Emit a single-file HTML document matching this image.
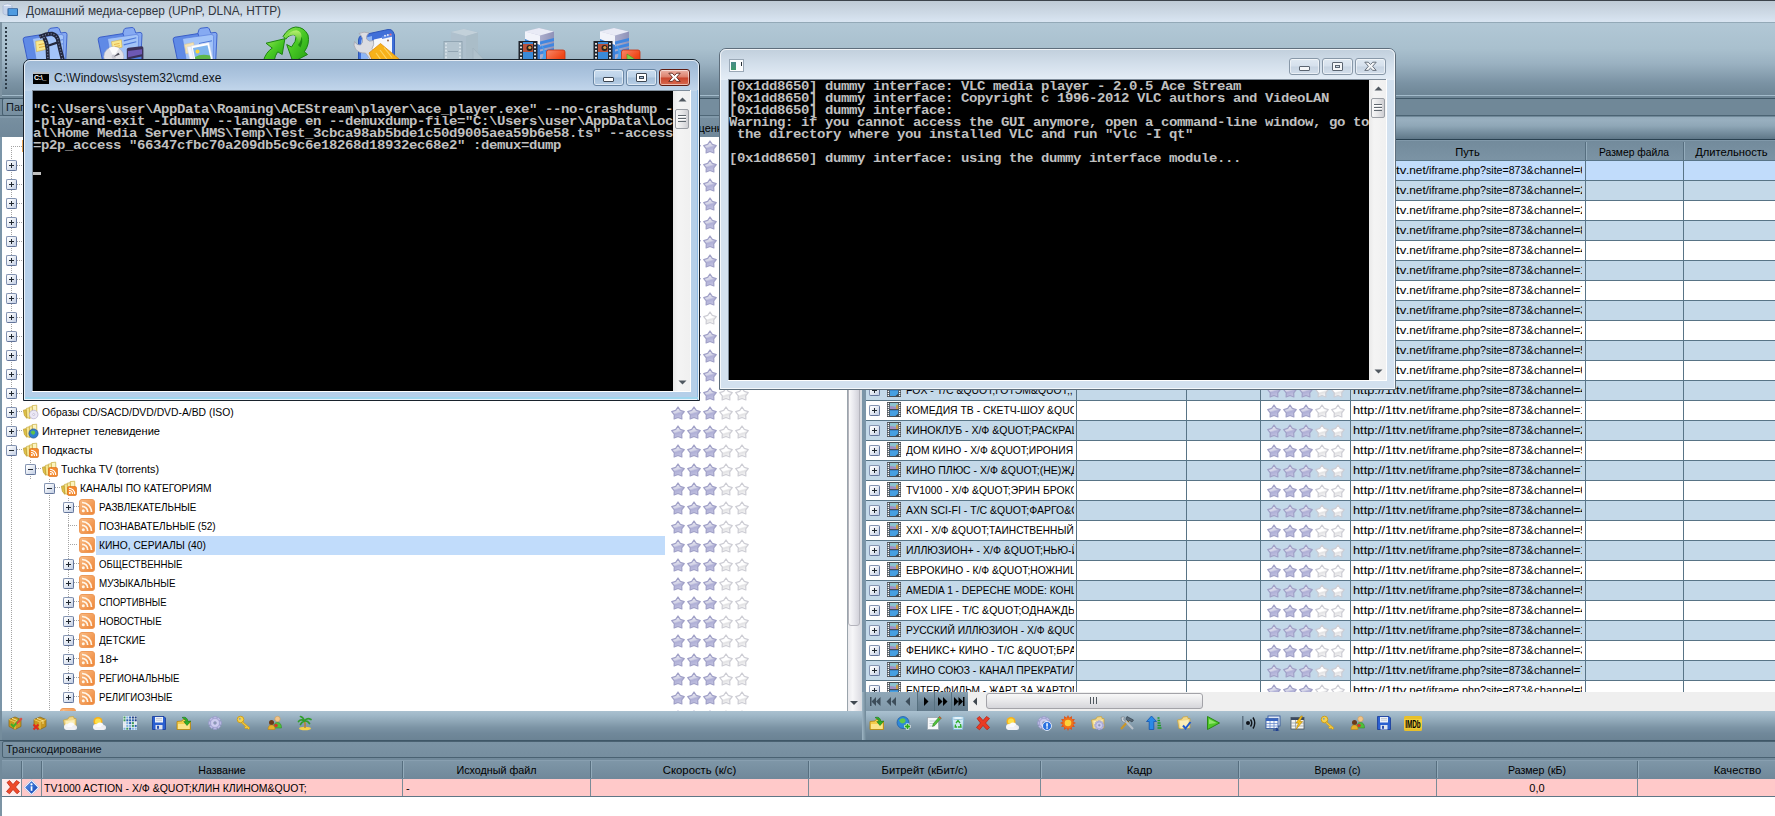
<!DOCTYPE html><html><head><meta charset="utf-8"><title>HMS</title><style>
html,body{margin:0;padding:0}
body{width:1775px;height:816px;overflow:hidden;position:relative;background:#fff;font-family:"Liberation Sans",sans-serif;font-size:11px;color:#000;line-height:1}
div,span,svg{position:absolute;box-sizing:border-box}
.t{white-space:nowrap;font-size:11px;line-height:13px;height:13px}
.con{font-family:"Liberation Mono","DejaVu Sans Mono",monospace;font-weight:bold;font-size:14px;line-height:12px;height:12px;color:#c0c0c0;white-space:pre;letter-spacing:-0.4px;left:0;transform:scaleY(.9);transform-origin:0 10px}
.pm{width:11px;height:11px;border:1px solid;border-color:#8494b2 #62749a #62749a #8494b2;border-radius:2px;background:linear-gradient(135deg,#fff 10%,#c3cfe4)}
.pm i{position:absolute;left:2px;top:4px;width:5px;height:1px;background:#202830}
.pm b{position:absolute;left:4px;top:2px;width:1px;height:5px;background:#202830}
.hl{white-space:nowrap;font-size:11px;line-height:13px;height:13px;text-align:center;color:#000}
.row{left:0;width:909px;height:20px;border-bottom:1px solid #5f7787}
.vs{top:0;width:1px;height:100%;background:#5f7787}
</style></head><body>
<div style="left:0;top:0;width:1775px;height:22px;background:linear-gradient(#bdc9d4,#cbd7e3 50%,#d9e5f2)"></div>
<div style="left:0;top:0;width:1775px;height:1px;background:#3c434b"></div>
<svg style="left:2px;top:3px" width="17" height="15" viewBox="0 0 17 15">
<ellipse cx="5.5" cy="3" rx="4.5" ry="2" fill="#e8eef8" stroke="#9fb0cc" stroke-width=".6"/>
<path d="M1 3v7c0 1.2 2 2 4.5 2s4.500-.8 4.500-2V3" fill="#c5d3ea" stroke="#9fb0cc" stroke-width=".6"/>
<rect x="5.500" y="5.200" width="10.500" height="7.800" rx=".8" fill="#2a5f9a"/>
<rect x="6.500" y="6" width="8.500" height="6" fill="#4f9be0"/>
</svg>
<div class="t" style="left:26px;top:4px;font-size:12px;line-height:14px;height:14px;color:#30363e;transform:scaleX(0.9859);transform-origin:0 0">Домашний медиа-сервер (UPnP, DLNA, HTTP)</div>
<div style="left:0;top:22px;width:1775px;height:76px;background:linear-gradient(#b2c8d6 0%,#a9c0ce 35%,#9ab1c1 55%,#7b93a4 80%,#6d8595 97%)"></div>
<div style="left:0;top:22px;width:1775px;height:1px;background:#93a9b7"></div>
<div style="left:0;top:95px;width:1775px;height:1px;background:#a3bbcb"></div>
<div style="left:0;top:96px;width:1775px;height:2px;background:#6f8797"></div>
<div style="left:0;top:98px;width:1775px;height:1px;background:#3f5767"></div>
<div style="left:0;top:22px;width:2px;height:76px;background:#7d93a2"></div>
<div style="left:5px;top:27px;width:2px;height:64px;background:repeating-linear-gradient(#2e3c48 0 2px,transparent 2px 4px)"></div>
<svg style="left:21px;top:25px" width="50" height="40" viewBox="0 0 50 40"><path d="M26.500 9.500 L28 4.600 Q28.500 3.400 30 3.200 L36 2.500 Q37.600 2.500 38.300 3.900 L39.800 8 L44 7.400 Q46 7.400 46 9.600 L44.500 40 L12 40 Z" fill="#86aaf2" stroke="#3f63cb" stroke-width="1"/>
<path d="M2.200 14.800 Q1.800 12.600 4 12.200 L27 8.600 L37 40 L7.500 40 Z" fill="#5f8ae6" stroke="#3b5ec8" stroke-width="1"/>
<path d="M11.500 13.500 L40 9.500 Q42.500 9.300 42.600 11.500 L42 40 L16 40 Z" fill="#a3c4f8" stroke="#5a80dc" stroke-width=".7"/><path d="M14.700 16.300 L25 14.700 L25.800 24.200 L15.500 26.600 Z" fill="#f9e88e" stroke="#d4b048" stroke-width=".6"/><path d="M17.500 19.800 l6 -1.200 M18 22.500 l6 -1.200" stroke="#e0a838" stroke-width=".9"/><path d="M37 15.500 l5 -.8 M37.500 19.500 l4.500 -.7" stroke="#5a82d8" stroke-width=".9"/><path d="M18.500 12 Q26 8.500 31 8.800 Q35.500 10 36.800 14 Q38.500 22 41.800 35 L43 40" fill="none" stroke="#23283c" stroke-width="4"/><path d="M18.500 12 Q26 8.500 31 8.800 Q35.500 10 36.800 14 Q38.500 22 41.800 35 L43 40" fill="none" stroke="#7f8db4" stroke-width="1.200" stroke-dasharray="1 1.900"/><path d="M23 12.400 Q26 17 26.500 24 L27.200 40" fill="none" stroke="#23283c" stroke-width="3.800"/><path d="M23 12.400 Q26 17 26.500 24 L27.200 40" fill="none" stroke="#7f8db4" stroke-width="1.100" stroke-dasharray="1 1.900"/><path d="M27 20.700 L37.600 17.100" stroke="#23283c" stroke-width="2.200"/></svg>
<svg style="left:96px;top:25px" width="52" height="40" viewBox="0 0 52 40"><path d="M26.500 9.500 L28 4.600 Q28.500 3.400 30 3.200 L36 2.500 Q37.600 2.500 38.300 3.900 L39.800 8 L44 7.400 Q46 7.400 46 9.600 L44.500 40 L12 40 Z" fill="#86aaf2" stroke="#3f63cb" stroke-width="1"/>
<path d="M2.200 14.800 Q1.800 12.600 4 12.200 L27 8.600 L37 40 L7.500 40 Z" fill="#5f8ae6" stroke="#3b5ec8" stroke-width="1"/>
<path d="M11.500 13.500 L40 9.500 Q42.500 9.300 42.600 11.500 L42 40 L16 40 Z" fill="#a3c4f8" stroke="#5a80dc" stroke-width=".7"/><path d="M15.500 16.700 L25.300 14.700 L26.100 22.200 L16.600 24.200 Z" fill="#f9e88e" stroke="#d4b048" stroke-width=".6"/><path d="M18 19.500 l5.500 -1.100 M18.500 21.800 l5.500 -1.100" stroke="#e0a838" stroke-width=".8"/><path d="M27.700 15.900 L40.300 12.800 M27.700 19.900 L40.300 16.700" stroke="#4d78d8" stroke-width="1.100"/><path d="M30.800 24.400 Q31 23 32.500 22.800 L45.500 21.300 Q47.400 21.300 47.400 23 L47.400 40 L30.800 40Z" fill="#3b3158"/><path d="M32 26 l14 -1.800 v5 l-14 3z" fill="#6d58b4"/><path d="M32 34.500 l13.500 -3 v3 l-13.500 3z" fill="#4f7fe0"/><circle cx="17.800" cy="31.700" r="10" fill="#e2e2e7" stroke="#b4b4bd" stroke-width=".6"/><path d="M17.800 31.700 L13 23 A10 10 0 0 1 23 23.200Z" fill="#fbfbfc"/><circle cx="17.800" cy="31.700" r="2.200" fill="#c9c9d2"/><path d="M17.800 31.700 l4.500 -4 l1.500 1.800z" fill="#4a4a55"/></svg>
<svg style="left:171px;top:25px" width="50" height="40" viewBox="0 0 50 40"><path d="M26.500 9.500 L28 4.600 Q28.500 3.400 30 3.200 L36 2.500 Q37.600 2.500 38.300 3.900 L39.800 8 L44 7.400 Q46 7.400 46 9.600 L44.500 40 L12 40 Z" fill="#86aaf2" stroke="#3f63cb" stroke-width="1"/>
<path d="M2.200 14.800 Q1.800 12.600 4 12.200 L27 8.600 L37 40 L7.500 40 Z" fill="#5f8ae6" stroke="#3b5ec8" stroke-width="1"/>
<path d="M11.500 13.500 L40 9.500 Q42.500 9.300 42.600 11.500 L42 40 L16 40 Z" fill="#a3c4f8" stroke="#5a80dc" stroke-width=".7"/><path d="M28 18.500 l13 -2.700" stroke="#4d78d8" stroke-width="1"/><path d="M13.500 19.500 l9 -2 l2 9 l-9.500 2.200 z" fill="#f4e3b5" stroke="#d8c08a" stroke-width=".5"/><path d="M16 22 l18 -3.500 l4 21.500 l-18 0 z" fill="#f4f7ff" stroke="#c9d3ea" stroke-width=".5"/><path d="M20 21 l18 -3.500 l5 22.500 l-19 0 z" fill="#ffffff" stroke="#c9d3ea" stroke-width=".5"/><path d="M22 23 l14.500 -2.800 l3 13 l-14.800 2.800 z" fill="#7fb5ee"/><path d="M24 32 q6 -3.500 15 -1.500 l1 5 l-15 3z" fill="#5fb84a"/><circle cx="26.500" cy="26.500" r="2" fill="#f7d53a"/></svg>
<svg style="left:260px;top:24px" width="52" height="40" viewBox="0 0 52 40"><defs><linearGradient id="gg" x1="0" y1="0" x2="1" y2="1"><stop offset="0" stop-color="#9be858"/><stop offset=".5" stop-color="#48c824"/><stop offset="1" stop-color="#22a012"/></linearGradient><linearGradient id="gh" x1="0" y1="0" x2="0" y2="1"><stop offset="0" stop-color="#b8f070"/><stop offset="1" stop-color="#3cb81c"/></linearGradient></defs><path d="M3.300 37 Q6 28 12.300 24.100 L6 19.200 L24.900 14.700 L22.200 30.500 L17.700 27.800 Q15 31.500 14.100 37 Z" fill="url(#gg)" stroke="#1c8410" stroke-width="1"/><path d="M23.100 12.400 Q28 4 35.700 3 Q44 3 48 11 Q50 20 44.300 27.800 L47.500 30.500 L33 38 L26.700 20.500 L31.500 23 Q36.500 17 36 12.500 Q34.500 9.500 30 11.500 Q27 13 25.800 15.200 Z" fill="url(#gg)" stroke="#1c8410" stroke-width="1"/><path d="M26.500 13 Q30 6.500 36.500 6.300 Q41.500 7 41.500 12.500 Q41 18 38 21 Q38.500 16 36 12.500 Q34.500 9.500 30 11.500 Q28 12.300 26.500 13Z" fill="url(#gh)"/><path d="M38 21 Q41 18 41.500 12.500 Q43.500 17 40.500 23.500Z" fill="#1f8a12"/></svg>
<svg style="left:350px;top:26px" width="52" height="38" viewBox="0 0 52 38"><path d="M8.500 14 Q8.500 10 12.500 9 L38 3.500 Q41.500 3 43 5.500 L44.500 9 L44.500 38 L8.500 38 Z" fill="#3f6fd8" stroke="#2c55b8" stroke-width="1"/><path d="M11 16 Q11 12.500 14 12 L22 10 L22 38 L11 38Z" fill="#8db5f5"/><path d="M24 13.500 L42 9.500 L42 38 L17 38 Z" fill="#f6f8fc"/><path d="M32 10 l10 -2.300 v3 l-10 2.300z" fill="#5a86e4"/><circle cx="35" cy="9.800" r="1" fill="#dfe8fa"/><circle cx="37.800" cy="9.100" r="1" fill="#dfe8fa"/><circle cx="40.500" cy="8.500" r="1.100" fill="#e86a7a"/><circle cx="38" cy="14.500" r=".9" fill="#8a5a3a"/><path d="M9 7.500 Q14 5 19 7 Q16 9.500 16.500 13 Q19 16.500 23.500 14.500 Q24.500 19 22 22.500 L29 31 L22 36 L15.500 27 Q9 27.500 5.500 23 Q3 19 4.500 15.500 Q6.500 19.500 10.500 19 Q13.500 16.500 12.500 12.500 Q11.500 9.500 9 7.500Z" fill="#dcdde2" stroke="#a3a5ae" stroke-width=".8"/><path d="M19 27 L30.500 17.500 L49 33 L46 38 L24 38 Z" fill="#f7b21a" stroke="#e08f10" stroke-width=".8"/><path d="M26 27 l8 11 M30 24 l9 12 M34 21.500 l8 10" stroke="#fbd463" stroke-width="1.200"/></svg>
<svg style="left:442px;top:27px" width="52" height="38" viewBox="0 0 52 38"><path d="M9 5 L22 2 L36 5.500 L36 38 L9 38Z" fill="#afc0cc" opacity=".85"/><path d="M9 5 L22 2 L36 5.500 L24 9 Z" fill="#c5d3dc" opacity=".9"/><path d="M24 9 L36 5.500 L36 38 L24 38Z" fill="#a9bbc7" opacity=".8"/><rect x="2" y="14.500" width="18" height="24" fill="#b4c5d0" stroke="#8ea2b0" stroke-width=".9"/><path d="M4 16 v22 M18 16 v22" stroke="#dfe8ee" stroke-width="1.600" stroke-dasharray="1.600 1.800"/><path d="M6 24.500 h10" stroke="#8ea2b0" stroke-width=".9"/><path d="M31 38 L31 21 L47 38Z" fill="#b0c1cc" stroke="#9eb0bc" stroke-width=".6"/></svg>
<svg style="left:517px;top:26px" width="52" height="38" viewBox="0 0 52 38"><defs><linearGradient id="sv517" x1="0" y1="0" x2="1" y2="0"><stop offset="0" stop-color="#c9cbe2"/><stop offset="1" stop-color="#8f92b8"/></linearGradient><linearGradient id="rd517" x1="0" y1="0" x2="1" y2="1"><stop offset="0" stop-color="#f98a6a"/><stop offset=".6" stop-color="#f0481a"/><stop offset="1" stop-color="#d9360c"/></linearGradient></defs><path d="M8 5.500 L22 2 L37 5.500 L37 38 L8 38Z" fill="url(#sv517)"/><path d="M8 5.500 L22 2 L37 5.500 L23 9.500 Z" fill="#e9ebf6"/><path d="M8 5.500 L23 9.500 L23 38 L8 38Z" fill="#f1f3fa"/><path d="M8 13 L23 19 L23 38 L8 38Z" fill="#3b7fd6"/><path d="M23 15.500 L37 12 V15 L23 18.500Z M23 20.500 L37 17 V20 L23 23.500Z M23 25.500 L37 22 V25 L23 28.500Z" fill="#3f86e0"/><path d="M21 14 Q28 22 26 31 Q22 36 14 38 L30 38 Q32 26 21 14Z" fill="#4aa0ee"/><rect x="2" y="15.500" width="18" height="23" fill="#3a8ad8" stroke="#20242c" stroke-width="1"/><rect x="5.500" y="18" width="11" height="8" fill="#b8503a"/><circle cx="12.500" cy="22" r="3" fill="#2a2420"/><circle cx="12.800" cy="21.500" r="1.600" fill="#d89a4a"/><path d="M2 15.500 h4 v23 h-4z M16 15.500 h4 v23 h-4z" fill="#20242c"/><path d="M4 17 v22 M18 17 v22" stroke="#f4f4f4" stroke-width="1.800" stroke-dasharray="1.800 1.700"/><path d="M9 38 Q11 34 16 33 L14 38Z" fill="#15181c"/><rect x="29.500" y="24" width="18.500" height="16" rx="2" fill="url(#rd517)" stroke="#c8300c" stroke-width=".8"/></svg>
<svg style="left:592px;top:26px" width="52" height="38" viewBox="0 0 52 38"><defs><linearGradient id="sv592" x1="0" y1="0" x2="1" y2="0"><stop offset="0" stop-color="#c9cbe2"/><stop offset="1" stop-color="#8f92b8"/></linearGradient><linearGradient id="rd592" x1="0" y1="0" x2="1" y2="1"><stop offset="0" stop-color="#f98a6a"/><stop offset=".6" stop-color="#f0481a"/><stop offset="1" stop-color="#d9360c"/></linearGradient></defs><path d="M8 5.500 L22 2 L37 5.500 L37 38 L8 38Z" fill="url(#sv592)"/><path d="M8 5.500 L22 2 L37 5.500 L23 9.500 Z" fill="#e9ebf6"/><path d="M8 5.500 L23 9.500 L23 38 L8 38Z" fill="#f1f3fa"/><path d="M8 13 L23 19 L23 38 L8 38Z" fill="#3b7fd6"/><path d="M23 15.500 L37 12 V15 L23 18.500Z M23 20.500 L37 17 V20 L23 23.500Z M23 25.500 L37 22 V25 L23 28.500Z" fill="#3f86e0"/><path d="M21 14 Q28 22 26 31 Q22 36 14 38 L30 38 Q32 26 21 14Z" fill="#4aa0ee"/><rect x="2" y="15.500" width="18" height="23" fill="#3a8ad8" stroke="#20242c" stroke-width="1"/><rect x="5.500" y="18" width="11" height="8" fill="#b8503a"/><circle cx="12.500" cy="22" r="3" fill="#2a2420"/><circle cx="12.800" cy="21.500" r="1.600" fill="#d89a4a"/><path d="M2 15.500 h4 v23 h-4z M16 15.500 h4 v23 h-4z" fill="#20242c"/><path d="M4 17 v22 M18 17 v22" stroke="#f4f4f4" stroke-width="1.800" stroke-dasharray="1.800 1.700"/><path d="M9 38 Q11 34 16 33 L14 38Z" fill="#15181c"/><rect x="29.500" y="24" width="18.500" height="16" rx="2" fill="url(#rd592)" stroke="#c8300c" stroke-width=".8"/><path d="M35 28 L35 40 L47 36 Z" fill="#7fd04a" stroke="#4a9a20" stroke-width=".6"/></svg>
<svg width="0" height="0" style="left:0;top:0"><defs><linearGradient id="sf" x1=".35" y1="0" x2=".65" y2="1"><stop offset="0" stop-color="#ebebf3"/><stop offset=".42" stop-color="#d6d6e8"/><stop offset=".56" stop-color="#afafd6"/><stop offset="1" stop-color="#c6c6e3"/></linearGradient><linearGradient id="se" x1=".35" y1="0" x2=".65" y2="1"><stop offset="0" stop-color="#ffffff"/><stop offset=".5" stop-color="#ffffff"/><stop offset=".62" stop-color="#e2e2e4"/><stop offset="1" stop-color="#fafafa"/></linearGradient><g id="s1"><path d="M7.00 1.00 L9.29 4.44 L13.28 5.56 L10.71 8.81 L10.88 12.94 L7.00 11.50 L3.12 12.94 L3.29 8.81 L0.72 5.56 L4.71 4.44 Z" fill="url(#sf)" stroke="#a0a0c7" stroke-width="1.2" stroke-linejoin="round"/></g><g id="s0"><path d="M7.00 1.00 L9.29 4.44 L13.28 5.56 L10.71 8.81 L10.88 12.94 L7.00 11.50 L3.12 12.94 L3.29 8.81 L0.72 5.56 L4.71 4.44 Z" fill="url(#se)" stroke="#cdcdd4" stroke-width="1.2" stroke-linejoin="round"/></g><g id="st3"><use href="#s1"/><use href="#s1" x="16"/><use href="#s1" x="32"/><use href="#s0" x="48"/><use href="#s0" x="64"/></g><g id="st2"><use href="#s1"/><use href="#s1" x="16"/><use href="#s0" x="32"/><use href="#s0" x="48"/><use href="#s0" x="64"/></g></defs></svg>
<div style="left:0;top:99px;width:862px;height:38px;background:#758d9e"></div>
<div style="left:0;top:115px;width:862px;height:1px;background:#4f6777"></div>
<div style="left:0;top:116px;width:862px;height:2px;background:#8199aa"></div>
<div style="left:0;top:118px;width:862px;height:19px;background:linear-gradient(#778fa0,#70889a)"></div>
<div style="left:2px;top:98px;width:70px;height:18px;border:1px solid #465e6e;border-radius:2px;background:linear-gradient(#869eaf,#768e9f)"></div>
<div class="t" style="left:6px;top:101px;color:#10181f">Папки</div>
<div class="hl" style="left:667px;top:122px;width:84px">Оценка</div>
<div style="left:0;top:137px;width:862px;height:574px;background:#7b95a8"></div>
<div style="left:2px;top:137px;width:845px;height:574px;background:#fff;overflow:hidden" id="tree">
<div style="left:9px;top:9px;width:1px;height:570px;background:repeating-linear-gradient(180deg,#a4a4a4 0 1px,transparent 1px 2px)"></div>
<div style="left:28px;top:323px;width:1px;height:19px;background:repeating-linear-gradient(180deg,#a4a4a4 0 1px,transparent 1px 2px)"></div>
<div style="left:47px;top:342px;width:1px;height:237px;background:repeating-linear-gradient(180deg,#a4a4a4 0 1px,transparent 1px 2px)"></div>
<div style="left:66px;top:361px;width:1px;height:199px;background:repeating-linear-gradient(180deg,#a4a4a4 0 1px,transparent 1px 2px)"></div>
<div style="left:9px;top:9px;width:11px;height:1px;background:repeating-linear-gradient(90deg,#a4a4a4 0 1px,transparent 1px 2px)"></div>
<div style="left:20px;top:3px;width:3px;height:12px;background:#e9a455"></div>
<svg style="left:669px;top:3px" width="78" height="15" viewBox="0 0 78 15"><use href="#st3"/></svg>
<div style="left:15px;top:28px;width:5px;height:1px;background:repeating-linear-gradient(90deg,#a4a4a4 0 1px,transparent 1px 2px)"></div>
<div class="pm" style="left:4px;top:23px"><i></i><b></b></div>
<svg style="left:669px;top:22px" width="78" height="15" viewBox="0 0 78 15"><use href="#st3"/></svg>
<div style="left:15px;top:47px;width:5px;height:1px;background:repeating-linear-gradient(90deg,#a4a4a4 0 1px,transparent 1px 2px)"></div>
<div class="pm" style="left:4px;top:42px"><i></i><b></b></div>
<svg style="left:669px;top:41px" width="78" height="15" viewBox="0 0 78 15"><use href="#st3"/></svg>
<div style="left:15px;top:66px;width:5px;height:1px;background:repeating-linear-gradient(90deg,#a4a4a4 0 1px,transparent 1px 2px)"></div>
<div class="pm" style="left:4px;top:61px"><i></i><b></b></div>
<svg style="left:669px;top:60px" width="78" height="15" viewBox="0 0 78 15"><use href="#st3"/></svg>
<div style="left:15px;top:85px;width:5px;height:1px;background:repeating-linear-gradient(90deg,#a4a4a4 0 1px,transparent 1px 2px)"></div>
<div class="pm" style="left:4px;top:80px"><i></i><b></b></div>
<svg style="left:669px;top:79px" width="78" height="15" viewBox="0 0 78 15"><use href="#st3"/></svg>
<div style="left:15px;top:104px;width:5px;height:1px;background:repeating-linear-gradient(90deg,#a4a4a4 0 1px,transparent 1px 2px)"></div>
<div class="pm" style="left:4px;top:99px"><i></i><b></b></div>
<svg style="left:669px;top:98px" width="78" height="15" viewBox="0 0 78 15"><use href="#st3"/></svg>
<div style="left:15px;top:123px;width:5px;height:1px;background:repeating-linear-gradient(90deg,#a4a4a4 0 1px,transparent 1px 2px)"></div>
<div class="pm" style="left:4px;top:118px"><i></i><b></b></div>
<svg style="left:669px;top:117px" width="78" height="15" viewBox="0 0 78 15"><use href="#st3"/></svg>
<div style="left:15px;top:142px;width:5px;height:1px;background:repeating-linear-gradient(90deg,#a4a4a4 0 1px,transparent 1px 2px)"></div>
<div class="pm" style="left:4px;top:137px"><i></i><b></b></div>
<svg style="left:669px;top:136px" width="78" height="15" viewBox="0 0 78 15"><use href="#st3"/></svg>
<div style="left:15px;top:161px;width:5px;height:1px;background:repeating-linear-gradient(90deg,#a4a4a4 0 1px,transparent 1px 2px)"></div>
<div class="pm" style="left:4px;top:156px"><i></i><b></b></div>
<svg style="left:669px;top:155px" width="78" height="15" viewBox="0 0 78 15"><use href="#st3"/></svg>
<div style="left:15px;top:180px;width:5px;height:1px;background:repeating-linear-gradient(90deg,#a4a4a4 0 1px,transparent 1px 2px)"></div>
<div class="pm" style="left:4px;top:175px"><i></i><b></b></div>
<svg style="left:669px;top:174px" width="78" height="15" viewBox="0 0 78 15"><use href="#st2"/></svg>
<div style="left:15px;top:199px;width:5px;height:1px;background:repeating-linear-gradient(90deg,#a4a4a4 0 1px,transparent 1px 2px)"></div>
<div class="pm" style="left:4px;top:194px"><i></i><b></b></div>
<svg style="left:669px;top:193px" width="78" height="15" viewBox="0 0 78 15"><use href="#st3"/></svg>
<div style="left:15px;top:218px;width:5px;height:1px;background:repeating-linear-gradient(90deg,#a4a4a4 0 1px,transparent 1px 2px)"></div>
<div class="pm" style="left:4px;top:213px"><i></i><b></b></div>
<svg style="left:669px;top:212px" width="78" height="15" viewBox="0 0 78 15"><use href="#st3"/></svg>
<div style="left:15px;top:237px;width:5px;height:1px;background:repeating-linear-gradient(90deg,#a4a4a4 0 1px,transparent 1px 2px)"></div>
<div class="pm" style="left:4px;top:232px"><i></i><b></b></div>
<svg style="left:669px;top:231px" width="78" height="15" viewBox="0 0 78 15"><use href="#st3"/></svg>
<div style="left:15px;top:256px;width:5px;height:1px;background:repeating-linear-gradient(90deg,#a4a4a4 0 1px,transparent 1px 2px)"></div>
<div class="pm" style="left:4px;top:251px"><i></i><b></b></div>
<svg style="left:669px;top:250px" width="78" height="15" viewBox="0 0 78 15"><use href="#st3"/></svg>
<div style="left:15px;top:274px;width:5px;height:1px;background:repeating-linear-gradient(90deg,#a4a4a4 0 1px,transparent 1px 2px)"></div>
<div class="pm" style="left:4px;top:270px"><i></i><b></b></div>
<svg style="left:21px;top:267px" width="17" height="16" viewBox="0 0 17 16"><path d="M9.200 1.600 L13.700 1.200 L13.900 11.500 L9.400 13 Z" fill="#fbf4c0" stroke="#c8ac3c" stroke-width=".7"/><path d="M6.200 3.200 L9.300 2.700 L9.600 13.200 L6.600 14.300Z" fill="#f9eeaa" stroke="#c8ac3c" stroke-width=".7"/><path d="M3.400 4.400 L6.300 3.900 L6.700 14.600 L3.800 13.400Z" fill="#f6e693" stroke="#c8ac3c" stroke-width=".7"/><path d="M.4 6.200 L3 5.700 L3.800 14.400 L1.400 11.300Z" fill="#e3c548" stroke="#b8982c" stroke-width=".7"/><circle cx="10.700" cy="10.500" r="4.300" fill="#ebe8f5" stroke="#b3accb" stroke-width=".7"/><circle cx="10.700" cy="10.500" r="1" fill="#fff" stroke="#a59cc0" stroke-width=".5"/></svg>
<div class="t" style="left:40px;top:269px;transform:scaleX(0.9410);transform-origin:0 0">Образы CD/SACD/DVD/DVD-A/BD (ISO)</div>
<svg style="left:669px;top:269px" width="78" height="15" viewBox="0 0 78 15"><use href="#st3"/></svg>
<div style="left:15px;top:293px;width:5px;height:1px;background:repeating-linear-gradient(90deg,#a4a4a4 0 1px,transparent 1px 2px)"></div>
<div class="pm" style="left:4px;top:289px"><i></i><b></b></div>
<svg style="left:21px;top:286px" width="17" height="16" viewBox="0 0 17 16"><path d="M9.200 1.600 L13.700 1.200 L13.900 11.500 L9.400 13 Z" fill="#fbf4c0" stroke="#c8ac3c" stroke-width=".7"/><path d="M6.200 3.200 L9.300 2.700 L9.600 13.200 L6.600 14.300Z" fill="#f9eeaa" stroke="#c8ac3c" stroke-width=".7"/><path d="M3.400 4.400 L6.300 3.900 L6.700 14.600 L3.800 13.400Z" fill="#f6e693" stroke="#c8ac3c" stroke-width=".7"/><path d="M.4 6.200 L3 5.700 L3.800 14.400 L1.400 11.300Z" fill="#e3c548" stroke="#b8982c" stroke-width=".7"/><circle cx="10.500" cy="10.500" r="4.600" fill="#2f7fd0" stroke="#1d4f90" stroke-width=".7"/><path d="M7.500 9 q2 -2.500 4 -1 q1.500 2 -.5 3.500 q-2 1 -3.500 -2.500z" fill="#5fc24a"/></svg>
<div class="t" style="left:40px;top:288px;transform:scaleX(1.0075);transform-origin:0 0">Интернет телевидение</div>
<svg style="left:669px;top:288px" width="78" height="15" viewBox="0 0 78 15"><use href="#st3"/></svg>
<div style="left:15px;top:312px;width:5px;height:1px;background:repeating-linear-gradient(90deg,#a4a4a4 0 1px,transparent 1px 2px)"></div>
<div class="pm" style="left:4px;top:308px"><i></i></div>
<svg style="left:21px;top:305px" width="17" height="16" viewBox="0 0 17 16"><path d="M9.200 1.600 L13.700 1.200 L13.900 11.500 L9.400 13 Z" fill="#fbf4c0" stroke="#c8ac3c" stroke-width=".7"/><path d="M6.200 3.200 L9.300 2.700 L9.600 13.200 L6.600 14.300Z" fill="#f9eeaa" stroke="#c8ac3c" stroke-width=".7"/><path d="M3.400 4.400 L6.300 3.900 L6.700 14.600 L3.800 13.400Z" fill="#f6e693" stroke="#c8ac3c" stroke-width=".7"/><path d="M.4 6.200 L3 5.700 L3.800 14.400 L1.400 11.300Z" fill="#e3c548" stroke="#b8982c" stroke-width=".7"/><g transform="translate(6.5,6.5)"><rect width="9" height="9" rx="1.500" fill="#f58a2e" stroke="#d96a10" stroke-width=".6"/><circle cx="2.400" cy="6.600" r="1" fill="#fff"/><path d="M1.500 4 a3.500 3.500 0 0 1 3.500 3.500 M1.500 1.800 a5.700 5.700 0 0 1 5.700 5.700" fill="none" stroke="#fff" stroke-width="1.100"/></g></svg>
<div class="t" style="left:40px;top:307px;transform:scaleX(1.0155);transform-origin:0 0">Подкасты</div>
<svg style="left:669px;top:307px" width="78" height="15" viewBox="0 0 78 15"><use href="#st3"/></svg>
<div style="left:34px;top:331px;width:5px;height:1px;background:repeating-linear-gradient(90deg,#a4a4a4 0 1px,transparent 1px 2px)"></div>
<div class="pm" style="left:23px;top:327px"><i></i></div>
<svg style="left:40px;top:324px" width="17" height="16" viewBox="0 0 17 16"><path d="M9.200 1.600 L13.700 1.200 L13.900 11.500 L9.400 13 Z" fill="#fbf4c0" stroke="#c8ac3c" stroke-width=".7"/><path d="M6.200 3.200 L9.300 2.700 L9.600 13.200 L6.600 14.300Z" fill="#f9eeaa" stroke="#c8ac3c" stroke-width=".7"/><path d="M3.400 4.400 L6.300 3.900 L6.700 14.600 L3.800 13.400Z" fill="#f6e693" stroke="#c8ac3c" stroke-width=".7"/><path d="M.4 6.200 L3 5.700 L3.800 14.400 L1.400 11.300Z" fill="#e3c548" stroke="#b8982c" stroke-width=".7"/><g transform="translate(6.5,6.5)"><rect width="9" height="9" rx="1.500" fill="#f58a2e" stroke="#d96a10" stroke-width=".6"/><circle cx="2.400" cy="6.600" r="1" fill="#fff"/><path d="M1.500 4 a3.500 3.500 0 0 1 3.500 3.500 M1.500 1.800 a5.700 5.700 0 0 1 5.700 5.700" fill="none" stroke="#fff" stroke-width="1.100"/></g></svg>
<div class="t" style="left:59px;top:326px;transform:scaleX(0.9774);transform-origin:0 0">Tuchka TV (torrents)</div>
<svg style="left:669px;top:326px" width="78" height="15" viewBox="0 0 78 15"><use href="#st3"/></svg>
<div style="left:53px;top:350px;width:5px;height:1px;background:repeating-linear-gradient(90deg,#a4a4a4 0 1px,transparent 1px 2px)"></div>
<div class="pm" style="left:42px;top:346px"><i></i></div>
<svg style="left:59px;top:343px" width="17" height="16" viewBox="0 0 17 16"><path d="M9.200 1.600 L13.700 1.200 L13.900 11.500 L9.400 13 Z" fill="#fbf4c0" stroke="#c8ac3c" stroke-width=".7"/><path d="M6.200 3.200 L9.300 2.700 L9.600 13.200 L6.600 14.300Z" fill="#f9eeaa" stroke="#c8ac3c" stroke-width=".7"/><path d="M3.400 4.400 L6.300 3.900 L6.700 14.600 L3.800 13.400Z" fill="#f6e693" stroke="#c8ac3c" stroke-width=".7"/><path d="M.4 6.200 L3 5.700 L3.800 14.400 L1.400 11.300Z" fill="#e3c548" stroke="#b8982c" stroke-width=".7"/><g transform="translate(6.5,6.5)"><rect width="9" height="9" rx="1.500" fill="#f58a2e" stroke="#d96a10" stroke-width=".6"/><circle cx="2.400" cy="6.600" r="1" fill="#fff"/><path d="M1.500 4 a3.500 3.500 0 0 1 3.500 3.500 M1.500 1.800 a5.700 5.700 0 0 1 5.700 5.700" fill="none" stroke="#fff" stroke-width="1.100"/></g></svg>
<div class="t" style="left:78px;top:345px;transform:scaleX(0.9268);transform-origin:0 0">КАНАЛЫ ПО КАТЕГОРИЯМ</div>
<svg style="left:669px;top:345px" width="78" height="15" viewBox="0 0 78 15"><use href="#st3"/></svg>
<div style="left:72px;top:369px;width:5px;height:1px;background:repeating-linear-gradient(90deg,#a4a4a4 0 1px,transparent 1px 2px)"></div>
<div class="pm" style="left:61px;top:365px"><i></i><b></b></div>
<svg style="left:77px;top:362px" width="16" height="16" viewBox="0 0 16 16"><defs><linearGradient id="rg" x1="0" y1="0" x2="1" y2="1"><stop offset="0" stop-color="#f9bc86"/><stop offset="1" stop-color="#ee8434"/></linearGradient></defs><rect x=".5" y=".5" width="15" height="15" rx="2.500" fill="url(#rg)" stroke="#ee9a58" stroke-width="1"/><circle cx="4.300" cy="11.700" r="1.500" fill="#fff6e8"/><path d="M3 7.300 a5.700 5.700 0 0 1 5.700 5.700 M3 3.500 a9.500 9.500 0 0 1 9.500 9.500" fill="none" stroke="#fff6e8" stroke-width="1.700"/></svg>
<div class="t" style="left:97px;top:364px;transform:scaleX(0.8967);transform-origin:0 0">РАЗВЛЕКАТЕЛЬНЫЕ</div>
<svg style="left:669px;top:364px" width="78" height="15" viewBox="0 0 78 15"><use href="#st3"/></svg>
<div style="left:66px;top:388px;width:10px;height:1px;background:repeating-linear-gradient(90deg,#a4a4a4 0 1px,transparent 1px 2px)"></div>
<svg style="left:77px;top:381px" width="16" height="16" viewBox="0 0 16 16"><defs><linearGradient id="rg" x1="0" y1="0" x2="1" y2="1"><stop offset="0" stop-color="#f9bc86"/><stop offset="1" stop-color="#ee8434"/></linearGradient></defs><rect x=".5" y=".5" width="15" height="15" rx="2.500" fill="url(#rg)" stroke="#ee9a58" stroke-width="1"/><circle cx="4.300" cy="11.700" r="1.500" fill="#fff6e8"/><path d="M3 7.300 a5.700 5.700 0 0 1 5.700 5.700 M3 3.500 a9.500 9.500 0 0 1 9.500 9.500" fill="none" stroke="#fff6e8" stroke-width="1.700"/></svg>
<div class="t" style="left:97px;top:383px;transform:scaleX(0.9119);transform-origin:0 0">ПОЗНАВАТЕЛЬНЫЕ (52)</div>
<svg style="left:669px;top:383px" width="78" height="15" viewBox="0 0 78 15"><use href="#st3"/></svg>
<div style="left:66px;top:407px;width:10px;height:1px;background:repeating-linear-gradient(90deg,#a4a4a4 0 1px,transparent 1px 2px)"></div>
<div style="left:94px;top:399px;width:569px;height:19px;background:#c1dcfb"></div>
<svg style="left:77px;top:400px" width="16" height="16" viewBox="0 0 16 16"><defs><linearGradient id="rg" x1="0" y1="0" x2="1" y2="1"><stop offset="0" stop-color="#f9bc86"/><stop offset="1" stop-color="#ee8434"/></linearGradient></defs><rect x=".5" y=".5" width="15" height="15" rx="2.500" fill="url(#rg)" stroke="#ee9a58" stroke-width="1"/><circle cx="4.300" cy="11.700" r="1.500" fill="#fff6e8"/><path d="M3 7.300 a5.700 5.700 0 0 1 5.700 5.700 M3 3.500 a9.500 9.500 0 0 1 9.500 9.500" fill="none" stroke="#fff6e8" stroke-width="1.700"/></svg>
<div class="t" style="left:97px;top:402px;transform:scaleX(0.9327);transform-origin:0 0">КИНО, СЕРИАЛЫ (40)</div>
<svg style="left:669px;top:402px" width="78" height="15" viewBox="0 0 78 15"><use href="#st3"/></svg>
<div style="left:72px;top:426px;width:5px;height:1px;background:repeating-linear-gradient(90deg,#a4a4a4 0 1px,transparent 1px 2px)"></div>
<div class="pm" style="left:61px;top:422px"><i></i><b></b></div>
<svg style="left:77px;top:419px" width="16" height="16" viewBox="0 0 16 16"><defs><linearGradient id="rg" x1="0" y1="0" x2="1" y2="1"><stop offset="0" stop-color="#f9bc86"/><stop offset="1" stop-color="#ee8434"/></linearGradient></defs><rect x=".5" y=".5" width="15" height="15" rx="2.500" fill="url(#rg)" stroke="#ee9a58" stroke-width="1"/><circle cx="4.300" cy="11.700" r="1.500" fill="#fff6e8"/><path d="M3 7.300 a5.700 5.700 0 0 1 5.700 5.700 M3 3.500 a9.500 9.500 0 0 1 9.500 9.500" fill="none" stroke="#fff6e8" stroke-width="1.700"/></svg>
<div class="t" style="left:97px;top:421px;transform:scaleX(0.8746);transform-origin:0 0">ОБЩЕСТВЕННЫЕ</div>
<svg style="left:669px;top:421px" width="78" height="15" viewBox="0 0 78 15"><use href="#st3"/></svg>
<div style="left:72px;top:445px;width:5px;height:1px;background:repeating-linear-gradient(90deg,#a4a4a4 0 1px,transparent 1px 2px)"></div>
<div class="pm" style="left:61px;top:441px"><i></i><b></b></div>
<svg style="left:77px;top:438px" width="16" height="16" viewBox="0 0 16 16"><defs><linearGradient id="rg" x1="0" y1="0" x2="1" y2="1"><stop offset="0" stop-color="#f9bc86"/><stop offset="1" stop-color="#ee8434"/></linearGradient></defs><rect x=".5" y=".5" width="15" height="15" rx="2.500" fill="url(#rg)" stroke="#ee9a58" stroke-width="1"/><circle cx="4.300" cy="11.700" r="1.500" fill="#fff6e8"/><path d="M3 7.300 a5.700 5.700 0 0 1 5.700 5.700 M3 3.500 a9.500 9.500 0 0 1 9.500 9.500" fill="none" stroke="#fff6e8" stroke-width="1.700"/></svg>
<div class="t" style="left:97px;top:440px;transform:scaleX(0.8923);transform-origin:0 0">МУЗЫКАЛЬНЫЕ</div>
<svg style="left:669px;top:440px" width="78" height="15" viewBox="0 0 78 15"><use href="#st3"/></svg>
<div style="left:72px;top:464px;width:5px;height:1px;background:repeating-linear-gradient(90deg,#a4a4a4 0 1px,transparent 1px 2px)"></div>
<div class="pm" style="left:61px;top:460px"><i></i><b></b></div>
<svg style="left:77px;top:457px" width="16" height="16" viewBox="0 0 16 16"><defs><linearGradient id="rg" x1="0" y1="0" x2="1" y2="1"><stop offset="0" stop-color="#f9bc86"/><stop offset="1" stop-color="#ee8434"/></linearGradient></defs><rect x=".5" y=".5" width="15" height="15" rx="2.500" fill="url(#rg)" stroke="#ee9a58" stroke-width="1"/><circle cx="4.300" cy="11.700" r="1.500" fill="#fff6e8"/><path d="M3 7.300 a5.700 5.700 0 0 1 5.700 5.700 M3 3.500 a9.500 9.500 0 0 1 9.500 9.500" fill="none" stroke="#fff6e8" stroke-width="1.700"/></svg>
<div class="t" style="left:97px;top:459px;transform:scaleX(0.8628);transform-origin:0 0">СПОРТИВНЫЕ</div>
<svg style="left:669px;top:459px" width="78" height="15" viewBox="0 0 78 15"><use href="#st3"/></svg>
<div style="left:72px;top:483px;width:5px;height:1px;background:repeating-linear-gradient(90deg,#a4a4a4 0 1px,transparent 1px 2px)"></div>
<div class="pm" style="left:61px;top:479px"><i></i><b></b></div>
<svg style="left:77px;top:476px" width="16" height="16" viewBox="0 0 16 16"><defs><linearGradient id="rg" x1="0" y1="0" x2="1" y2="1"><stop offset="0" stop-color="#f9bc86"/><stop offset="1" stop-color="#ee8434"/></linearGradient></defs><rect x=".5" y=".5" width="15" height="15" rx="2.500" fill="url(#rg)" stroke="#ee9a58" stroke-width="1"/><circle cx="4.300" cy="11.700" r="1.500" fill="#fff6e8"/><path d="M3 7.300 a5.700 5.700 0 0 1 5.700 5.700 M3 3.500 a9.500 9.500 0 0 1 9.500 9.500" fill="none" stroke="#fff6e8" stroke-width="1.700"/></svg>
<div class="t" style="left:97px;top:478px;transform:scaleX(0.8772);transform-origin:0 0">НОВОСТНЫЕ</div>
<svg style="left:669px;top:478px" width="78" height="15" viewBox="0 0 78 15"><use href="#st3"/></svg>
<div style="left:72px;top:502px;width:5px;height:1px;background:repeating-linear-gradient(90deg,#a4a4a4 0 1px,transparent 1px 2px)"></div>
<div class="pm" style="left:61px;top:498px"><i></i><b></b></div>
<svg style="left:77px;top:495px" width="16" height="16" viewBox="0 0 16 16"><defs><linearGradient id="rg" x1="0" y1="0" x2="1" y2="1"><stop offset="0" stop-color="#f9bc86"/><stop offset="1" stop-color="#ee8434"/></linearGradient></defs><rect x=".5" y=".5" width="15" height="15" rx="2.500" fill="url(#rg)" stroke="#ee9a58" stroke-width="1"/><circle cx="4.300" cy="11.700" r="1.500" fill="#fff6e8"/><path d="M3 7.300 a5.700 5.700 0 0 1 5.700 5.700 M3 3.500 a9.500 9.500 0 0 1 9.500 9.500" fill="none" stroke="#fff6e8" stroke-width="1.700"/></svg>
<div class="t" style="left:97px;top:497px;transform:scaleX(0.9098);transform-origin:0 0">ДЕТСКИЕ</div>
<svg style="left:669px;top:497px" width="78" height="15" viewBox="0 0 78 15"><use href="#st3"/></svg>
<div style="left:72px;top:521px;width:5px;height:1px;background:repeating-linear-gradient(90deg,#a4a4a4 0 1px,transparent 1px 2px)"></div>
<div class="pm" style="left:61px;top:517px"><i></i><b></b></div>
<svg style="left:77px;top:514px" width="16" height="16" viewBox="0 0 16 16"><defs><linearGradient id="rg" x1="0" y1="0" x2="1" y2="1"><stop offset="0" stop-color="#f9bc86"/><stop offset="1" stop-color="#ee8434"/></linearGradient></defs><rect x=".5" y=".5" width="15" height="15" rx="2.500" fill="url(#rg)" stroke="#ee9a58" stroke-width="1"/><circle cx="4.300" cy="11.700" r="1.500" fill="#fff6e8"/><path d="M3 7.300 a5.700 5.700 0 0 1 5.700 5.700 M3 3.500 a9.500 9.500 0 0 1 9.500 9.500" fill="none" stroke="#fff6e8" stroke-width="1.700"/></svg>
<div class="t" style="left:97px;top:516px;transform:scaleX(1.0497);transform-origin:0 0">18+</div>
<svg style="left:669px;top:516px" width="78" height="15" viewBox="0 0 78 15"><use href="#st3"/></svg>
<div style="left:72px;top:540px;width:5px;height:1px;background:repeating-linear-gradient(90deg,#a4a4a4 0 1px,transparent 1px 2px)"></div>
<div class="pm" style="left:61px;top:536px"><i></i><b></b></div>
<svg style="left:77px;top:533px" width="16" height="16" viewBox="0 0 16 16"><defs><linearGradient id="rg" x1="0" y1="0" x2="1" y2="1"><stop offset="0" stop-color="#f9bc86"/><stop offset="1" stop-color="#ee8434"/></linearGradient></defs><rect x=".5" y=".5" width="15" height="15" rx="2.500" fill="url(#rg)" stroke="#ee9a58" stroke-width="1"/><circle cx="4.300" cy="11.700" r="1.500" fill="#fff6e8"/><path d="M3 7.300 a5.700 5.700 0 0 1 5.700 5.700 M3 3.500 a9.500 9.500 0 0 1 9.500 9.500" fill="none" stroke="#fff6e8" stroke-width="1.700"/></svg>
<div class="t" style="left:97px;top:535px;transform:scaleX(0.8732);transform-origin:0 0">РЕГИОНАЛЬНЫЕ</div>
<svg style="left:669px;top:535px" width="78" height="15" viewBox="0 0 78 15"><use href="#st3"/></svg>
<div style="left:72px;top:559px;width:5px;height:1px;background:repeating-linear-gradient(90deg,#a4a4a4 0 1px,transparent 1px 2px)"></div>
<div class="pm" style="left:61px;top:555px"><i></i><b></b></div>
<svg style="left:77px;top:552px" width="16" height="16" viewBox="0 0 16 16"><defs><linearGradient id="rg" x1="0" y1="0" x2="1" y2="1"><stop offset="0" stop-color="#f9bc86"/><stop offset="1" stop-color="#ee8434"/></linearGradient></defs><rect x=".5" y=".5" width="15" height="15" rx="2.500" fill="url(#rg)" stroke="#ee9a58" stroke-width="1"/><circle cx="4.300" cy="11.700" r="1.500" fill="#fff6e8"/><path d="M3 7.300 a5.700 5.700 0 0 1 5.700 5.700 M3 3.500 a9.500 9.500 0 0 1 9.500 9.500" fill="none" stroke="#fff6e8" stroke-width="1.700"/></svg>
<div class="t" style="left:97px;top:554px;transform:scaleX(0.8761);transform-origin:0 0">РЕЛИГИОЗНЫЕ</div>
<svg style="left:669px;top:554px" width="78" height="15" viewBox="0 0 78 15"><use href="#st3"/></svg>
<div style="left:47px;top:578px;width:10px;height:1px;background:repeating-linear-gradient(90deg,#a4a4a4 0 1px,transparent 1px 2px)"></div>
<svg style="left:58px;top:571px" width="16" height="16" viewBox="0 0 16 16"><defs><linearGradient id="rg" x1="0" y1="0" x2="1" y2="1"><stop offset="0" stop-color="#f9bc86"/><stop offset="1" stop-color="#ee8434"/></linearGradient></defs><rect x=".5" y=".5" width="15" height="15" rx="2.500" fill="url(#rg)" stroke="#ee9a58" stroke-width="1"/><circle cx="4.300" cy="11.700" r="1.500" fill="#fff6e8"/><path d="M3 7.300 a5.700 5.700 0 0 1 5.700 5.700 M3 3.500 a9.500 9.500 0 0 1 9.500 9.500" fill="none" stroke="#fff6e8" stroke-width="1.700"/></svg>
<svg style="left:669px;top:573px" width="78" height="15" viewBox="0 0 78 15"><use href="#st3"/></svg>
</div>
<div style="left:847px;top:137px;width:14px;height:574px;background:linear-gradient(90deg,#e6e6ea,#f6f6f8 40%,#dcdce2)"></div>
<div style="left:847px;top:137px;width:1px;height:574px;background:#9aa4ac"></div>
<div style="left:848px;top:150px;width:12px;height:476px;border:1px solid #b4b4bc;border-radius:3px;background:linear-gradient(90deg,#fafafa,#e9e9ee 45%,#d2d2da)"></div>
<svg style="left:849px;top:700px" width="10" height="6" viewBox="0 0 10 6"><path d="M1 1 h8 l-4 4z" fill="#404850"/></svg>
<div style="left:861px;top:137px;width:1px;height:574px;background:#d8dde2"></div>
<div style="left:862px;top:99px;width:913px;height:18px;background:#708898"></div>
<div style="left:862px;top:115px;width:913px;height:1px;background:#4b6373"></div>
<div style="left:862px;top:117px;width:913px;height:22px;background:linear-gradient(#93abbb 0%,#98afbf 15%,#8fa7b7 40%,#5f7788 100%)"></div>
<div style="left:862px;top:139px;width:913px;height:1px;background:#2a4151"></div>
<div style="left:862px;top:140px;width:913px;height:21px;background:linear-gradient(#728a9b,#7c94a5)"></div>
<div style="left:862px;top:140px;width:913px;height:1px;background:#8199aa"></div>
<div style="left:862px;top:160px;width:913px;height:1px;background:#587486"></div>
<div style="left:862px;top:140px;width:4px;height:571px;background:#7b95a8"></div>
<div style="left:1076px;top:142px;width:1px;height:18px;background:#566e7f"></div>
<div style="left:1077px;top:142px;width:1px;height:18px;background:#93abbb"></div>
<div style="left:1186px;top:142px;width:1px;height:18px;background:#566e7f"></div>
<div style="left:1187px;top:142px;width:1px;height:18px;background:#93abbb"></div>
<div style="left:1260px;top:142px;width:1px;height:18px;background:#566e7f"></div>
<div style="left:1261px;top:142px;width:1px;height:18px;background:#93abbb"></div>
<div style="left:1350px;top:142px;width:1px;height:18px;background:#566e7f"></div>
<div style="left:1351px;top:142px;width:1px;height:18px;background:#93abbb"></div>
<div style="left:1585px;top:142px;width:1px;height:18px;background:#566e7f"></div>
<div style="left:1586px;top:142px;width:1px;height:18px;background:#93abbb"></div>
<div style="left:1683px;top:142px;width:1px;height:18px;background:#566e7f"></div>
<div style="left:1684px;top:142px;width:1px;height:18px;background:#93abbb"></div>
<div class="hl" style="left:1351px;top:146px;width:233px;transform:scaleX(1.0129);transform-origin:50% 0">Путь</div>
<div class="hl" style="left:1586px;top:146px;width:96px;transform:scaleX(0.9368);transform-origin:50% 0">Размер файла</div>
<div class="hl" style="left:1684px;top:146px;width:95px;transform:scaleX(1.0155);transform-origin:50% 0">Длительность</div>
<svg width="0" height="0" style="left:0;top:0"><defs><g id="fm"><rect x="0" y="0" width="14" height="15" fill="#474c52"/><rect x="2.800" y="1" width="8.400" height="6" fill="#8cc3cf"/><rect x="2.800" y="8" width="8.400" height="6" fill="#47a0e2"/><path d="M2.800 4.500 q2 -1 4 0 t4.400 -1 v3.500 h-8.400z" fill="#a48fc0"/><path d="M9 7 v-3.500 q1 -1.500 2.200 -.5 v4z" fill="#c9a04e"/><path d="M8.500 14 l2.700 -2.500 v2.500z" fill="#3a4a58"/><path d="M2.800 8 h8.400 v1 h-8.400z" fill="#3a86c8"/><g fill="#fff"><rect x=".7" y="0.9" width="1.300" height="1.200"/><rect x="12" y="0.9" width="1.300" height="1.200"/><rect x=".7" y="2.9" width="1.300" height="1.200"/><rect x="12" y="2.9" width="1.300" height="1.200"/><rect x=".7" y="4.9" width="1.300" height="1.200"/><rect x="12" y="4.9" width="1.300" height="1.200"/><rect x=".7" y="6.9" width="1.300" height="1.200"/><rect x="12" y="6.9" width="1.300" height="1.200"/><rect x=".7" y="8.9" width="1.300" height="1.200"/><rect x="12" y="8.9" width="1.300" height="1.200"/><rect x=".7" y="10.9" width="1.300" height="1.200"/><rect x="12" y="10.9" width="1.300" height="1.200"/><rect x=".7" y="12.9" width="1.300" height="1.200"/><rect x="12" y="12.9" width="1.300" height="1.200"/></g></g></defs></svg>
<div style="left:866px;top:161px;width:909px;height:531px;overflow:hidden;background:#fff" id="grid">
<div class="row" style="top:0px;background:#c1dcfb;border-color:#587486">
<div class="pm" style="left:3px;top:4px"><i></i><b></b></div>
<svg style="left:21px;top:1px" width="14" height="15" viewBox="0 0 14 15"><use href="#fm"/></svg>
<svg style="left:401px;top:3px" width="78" height="15" viewBox="0 0 78 15"><use href="#st3"/></svg>
<div style="left:487px;top:0;width:228.500px;height:19px;overflow:hidden"><span class="t" style="left:0.0px;top:3px;transform:scaleX(1.1623);transform-origin:0 0">http://</span><span class="t" style="left:32.0px;top:3px;transform:scaleX(1.2011);transform-origin:0 0">1ttv</span><span class="t" style="left:53.3px;top:3px;transform:scaleX(1.0745);transform-origin:0 0">.net/</span><span class="t" style="left:76.3px;top:3px;transform:scaleX(0.9812);transform-origin:0 0">iframe.php?</span><span class="t" style="left:133.3px;top:3px;transform:scaleX(0.9648);transform-origin:0 0">site=873&amp;</span><span class="t" style="left:180.8px;top:3px;transform:scaleX(1.0341);transform-origin:0 0">channel=</span><span class="t" style="left:227.300px;top:3px">6</span></div>
<div class="vs" style="left:210px;background:#587486"></div>
<div class="vs" style="left:320px;background:#587486"></div>
<div class="vs" style="left:394px;background:#587486"></div>
<div class="vs" style="left:484px;background:#587486"></div>
<div class="vs" style="left:719px;background:#587486"></div>
<div class="vs" style="left:817px;background:#587486"></div>
</div>
<div class="row" style="top:20px;background:#c4d9e9;border-color:#587486">
<div class="pm" style="left:3px;top:4px"><i></i><b></b></div>
<svg style="left:21px;top:1px" width="14" height="15" viewBox="0 0 14 15"><use href="#fm"/></svg>
<svg style="left:401px;top:3px" width="78" height="15" viewBox="0 0 78 15"><use href="#st3"/></svg>
<div style="left:487px;top:0;width:228.500px;height:19px;overflow:hidden"><span class="t" style="left:0.0px;top:3px;transform:scaleX(1.1623);transform-origin:0 0">http://</span><span class="t" style="left:32.0px;top:3px;transform:scaleX(1.2011);transform-origin:0 0">1ttv</span><span class="t" style="left:53.3px;top:3px;transform:scaleX(1.0745);transform-origin:0 0">.net/</span><span class="t" style="left:76.3px;top:3px;transform:scaleX(0.9812);transform-origin:0 0">iframe.php?</span><span class="t" style="left:133.3px;top:3px;transform:scaleX(0.9648);transform-origin:0 0">site=873&amp;</span><span class="t" style="left:180.8px;top:3px;transform:scaleX(1.0341);transform-origin:0 0">channel=</span><span class="t" style="left:227.300px;top:3px">2</span></div>
<div class="vs" style="left:210px;background:#587486"></div>
<div class="vs" style="left:320px;background:#587486"></div>
<div class="vs" style="left:394px;background:#587486"></div>
<div class="vs" style="left:484px;background:#587486"></div>
<div class="vs" style="left:719px;background:#587486"></div>
<div class="vs" style="left:817px;background:#587486"></div>
</div>
<div class="row" style="top:40px;background:#ffffff;border-color:#587486">
<div class="pm" style="left:3px;top:4px"><i></i><b></b></div>
<svg style="left:21px;top:1px" width="14" height="15" viewBox="0 0 14 15"><use href="#fm"/></svg>
<svg style="left:401px;top:3px" width="78" height="15" viewBox="0 0 78 15"><use href="#st3"/></svg>
<div style="left:487px;top:0;width:228.500px;height:19px;overflow:hidden"><span class="t" style="left:0.0px;top:3px;transform:scaleX(1.1623);transform-origin:0 0">http://</span><span class="t" style="left:32.0px;top:3px;transform:scaleX(1.2011);transform-origin:0 0">1ttv</span><span class="t" style="left:53.3px;top:3px;transform:scaleX(1.0745);transform-origin:0 0">.net/</span><span class="t" style="left:76.3px;top:3px;transform:scaleX(0.9812);transform-origin:0 0">iframe.php?</span><span class="t" style="left:133.3px;top:3px;transform:scaleX(0.9648);transform-origin:0 0">site=873&amp;</span><span class="t" style="left:180.8px;top:3px;transform:scaleX(1.0341);transform-origin:0 0">channel=</span><span class="t" style="left:227.300px;top:3px">2</span></div>
<div class="vs" style="left:210px;background:#587486"></div>
<div class="vs" style="left:320px;background:#587486"></div>
<div class="vs" style="left:394px;background:#587486"></div>
<div class="vs" style="left:484px;background:#587486"></div>
<div class="vs" style="left:719px;background:#587486"></div>
<div class="vs" style="left:817px;background:#587486"></div>
</div>
<div class="row" style="top:60px;background:#c4d9e9;border-color:#587486">
<div class="pm" style="left:3px;top:4px"><i></i><b></b></div>
<svg style="left:21px;top:1px" width="14" height="15" viewBox="0 0 14 15"><use href="#fm"/></svg>
<svg style="left:401px;top:3px" width="78" height="15" viewBox="0 0 78 15"><use href="#st3"/></svg>
<div style="left:487px;top:0;width:228.500px;height:19px;overflow:hidden"><span class="t" style="left:0.0px;top:3px;transform:scaleX(1.1623);transform-origin:0 0">http://</span><span class="t" style="left:32.0px;top:3px;transform:scaleX(1.2011);transform-origin:0 0">1ttv</span><span class="t" style="left:53.3px;top:3px;transform:scaleX(1.0745);transform-origin:0 0">.net/</span><span class="t" style="left:76.3px;top:3px;transform:scaleX(0.9812);transform-origin:0 0">iframe.php?</span><span class="t" style="left:133.3px;top:3px;transform:scaleX(0.9648);transform-origin:0 0">site=873&amp;</span><span class="t" style="left:180.8px;top:3px;transform:scaleX(1.0341);transform-origin:0 0">channel=</span><span class="t" style="left:227.300px;top:3px">8</span></div>
<div class="vs" style="left:210px;background:#587486"></div>
<div class="vs" style="left:320px;background:#587486"></div>
<div class="vs" style="left:394px;background:#587486"></div>
<div class="vs" style="left:484px;background:#587486"></div>
<div class="vs" style="left:719px;background:#587486"></div>
<div class="vs" style="left:817px;background:#587486"></div>
</div>
<div class="row" style="top:80px;background:#ffffff;border-color:#587486">
<div class="pm" style="left:3px;top:4px"><i></i><b></b></div>
<svg style="left:21px;top:1px" width="14" height="15" viewBox="0 0 14 15"><use href="#fm"/></svg>
<svg style="left:401px;top:3px" width="78" height="15" viewBox="0 0 78 15"><use href="#st3"/></svg>
<div style="left:487px;top:0;width:228.500px;height:19px;overflow:hidden"><span class="t" style="left:0.0px;top:3px;transform:scaleX(1.1623);transform-origin:0 0">http://</span><span class="t" style="left:32.0px;top:3px;transform:scaleX(1.2011);transform-origin:0 0">1ttv</span><span class="t" style="left:53.3px;top:3px;transform:scaleX(1.0745);transform-origin:0 0">.net/</span><span class="t" style="left:76.3px;top:3px;transform:scaleX(0.9812);transform-origin:0 0">iframe.php?</span><span class="t" style="left:133.3px;top:3px;transform:scaleX(0.9648);transform-origin:0 0">site=873&amp;</span><span class="t" style="left:180.8px;top:3px;transform:scaleX(1.0341);transform-origin:0 0">channel=</span><span class="t" style="left:227.300px;top:3px">4</span></div>
<div class="vs" style="left:210px;background:#587486"></div>
<div class="vs" style="left:320px;background:#587486"></div>
<div class="vs" style="left:394px;background:#587486"></div>
<div class="vs" style="left:484px;background:#587486"></div>
<div class="vs" style="left:719px;background:#587486"></div>
<div class="vs" style="left:817px;background:#587486"></div>
</div>
<div class="row" style="top:100px;background:#c4d9e9;border-color:#587486">
<div class="pm" style="left:3px;top:4px"><i></i><b></b></div>
<svg style="left:21px;top:1px" width="14" height="15" viewBox="0 0 14 15"><use href="#fm"/></svg>
<svg style="left:401px;top:3px" width="78" height="15" viewBox="0 0 78 15"><use href="#st3"/></svg>
<div style="left:487px;top:0;width:228.500px;height:19px;overflow:hidden"><span class="t" style="left:0.0px;top:3px;transform:scaleX(1.1623);transform-origin:0 0">http://</span><span class="t" style="left:32.0px;top:3px;transform:scaleX(1.2011);transform-origin:0 0">1ttv</span><span class="t" style="left:53.3px;top:3px;transform:scaleX(1.0745);transform-origin:0 0">.net/</span><span class="t" style="left:76.3px;top:3px;transform:scaleX(0.9812);transform-origin:0 0">iframe.php?</span><span class="t" style="left:133.3px;top:3px;transform:scaleX(0.9648);transform-origin:0 0">site=873&amp;</span><span class="t" style="left:180.8px;top:3px;transform:scaleX(1.0341);transform-origin:0 0">channel=</span><span class="t" style="left:227.300px;top:3px">1</span></div>
<div class="vs" style="left:210px;background:#587486"></div>
<div class="vs" style="left:320px;background:#587486"></div>
<div class="vs" style="left:394px;background:#587486"></div>
<div class="vs" style="left:484px;background:#587486"></div>
<div class="vs" style="left:719px;background:#587486"></div>
<div class="vs" style="left:817px;background:#587486"></div>
</div>
<div class="row" style="top:120px;background:#ffffff;border-color:#587486">
<div class="pm" style="left:3px;top:4px"><i></i><b></b></div>
<svg style="left:21px;top:1px" width="14" height="15" viewBox="0 0 14 15"><use href="#fm"/></svg>
<svg style="left:401px;top:3px" width="78" height="15" viewBox="0 0 78 15"><use href="#st3"/></svg>
<div style="left:487px;top:0;width:228.500px;height:19px;overflow:hidden"><span class="t" style="left:0.0px;top:3px;transform:scaleX(1.1623);transform-origin:0 0">http://</span><span class="t" style="left:32.0px;top:3px;transform:scaleX(1.2011);transform-origin:0 0">1ttv</span><span class="t" style="left:53.3px;top:3px;transform:scaleX(1.0745);transform-origin:0 0">.net/</span><span class="t" style="left:76.3px;top:3px;transform:scaleX(0.9812);transform-origin:0 0">iframe.php?</span><span class="t" style="left:133.3px;top:3px;transform:scaleX(0.9648);transform-origin:0 0">site=873&amp;</span><span class="t" style="left:180.8px;top:3px;transform:scaleX(1.0341);transform-origin:0 0">channel=</span><span class="t" style="left:227.300px;top:3px">7</span></div>
<div class="vs" style="left:210px;background:#587486"></div>
<div class="vs" style="left:320px;background:#587486"></div>
<div class="vs" style="left:394px;background:#587486"></div>
<div class="vs" style="left:484px;background:#587486"></div>
<div class="vs" style="left:719px;background:#587486"></div>
<div class="vs" style="left:817px;background:#587486"></div>
</div>
<div class="row" style="top:140px;background:#c4d9e9;border-color:#587486">
<div class="pm" style="left:3px;top:4px"><i></i><b></b></div>
<svg style="left:21px;top:1px" width="14" height="15" viewBox="0 0 14 15"><use href="#fm"/></svg>
<svg style="left:401px;top:3px" width="78" height="15" viewBox="0 0 78 15"><use href="#st3"/></svg>
<div style="left:487px;top:0;width:228.500px;height:19px;overflow:hidden"><span class="t" style="left:0.0px;top:3px;transform:scaleX(1.1623);transform-origin:0 0">http://</span><span class="t" style="left:32.0px;top:3px;transform:scaleX(1.2011);transform-origin:0 0">1ttv</span><span class="t" style="left:53.3px;top:3px;transform:scaleX(1.0745);transform-origin:0 0">.net/</span><span class="t" style="left:76.3px;top:3px;transform:scaleX(0.9812);transform-origin:0 0">iframe.php?</span><span class="t" style="left:133.3px;top:3px;transform:scaleX(0.9648);transform-origin:0 0">site=873&amp;</span><span class="t" style="left:180.8px;top:3px;transform:scaleX(1.0341);transform-origin:0 0">channel=</span><span class="t" style="left:227.300px;top:3px">3</span></div>
<div class="vs" style="left:210px;background:#587486"></div>
<div class="vs" style="left:320px;background:#587486"></div>
<div class="vs" style="left:394px;background:#587486"></div>
<div class="vs" style="left:484px;background:#587486"></div>
<div class="vs" style="left:719px;background:#587486"></div>
<div class="vs" style="left:817px;background:#587486"></div>
</div>
<div class="row" style="top:160px;background:#ffffff;border-color:#587486">
<div class="pm" style="left:3px;top:4px"><i></i><b></b></div>
<svg style="left:21px;top:1px" width="14" height="15" viewBox="0 0 14 15"><use href="#fm"/></svg>
<svg style="left:401px;top:3px" width="78" height="15" viewBox="0 0 78 15"><use href="#st3"/></svg>
<div style="left:487px;top:0;width:228.500px;height:19px;overflow:hidden"><span class="t" style="left:0.0px;top:3px;transform:scaleX(1.1623);transform-origin:0 0">http://</span><span class="t" style="left:32.0px;top:3px;transform:scaleX(1.2011);transform-origin:0 0">1ttv</span><span class="t" style="left:53.3px;top:3px;transform:scaleX(1.0745);transform-origin:0 0">.net/</span><span class="t" style="left:76.3px;top:3px;transform:scaleX(0.9812);transform-origin:0 0">iframe.php?</span><span class="t" style="left:133.3px;top:3px;transform:scaleX(0.9648);transform-origin:0 0">site=873&amp;</span><span class="t" style="left:180.8px;top:3px;transform:scaleX(1.0341);transform-origin:0 0">channel=</span><span class="t" style="left:227.300px;top:3px">2</span></div>
<div class="vs" style="left:210px;background:#587486"></div>
<div class="vs" style="left:320px;background:#587486"></div>
<div class="vs" style="left:394px;background:#587486"></div>
<div class="vs" style="left:484px;background:#587486"></div>
<div class="vs" style="left:719px;background:#587486"></div>
<div class="vs" style="left:817px;background:#587486"></div>
</div>
<div class="row" style="top:180px;background:#c4d9e9;border-color:#587486">
<div class="pm" style="left:3px;top:4px"><i></i><b></b></div>
<svg style="left:21px;top:1px" width="14" height="15" viewBox="0 0 14 15"><use href="#fm"/></svg>
<svg style="left:401px;top:3px" width="78" height="15" viewBox="0 0 78 15"><use href="#st3"/></svg>
<div style="left:487px;top:0;width:228.500px;height:19px;overflow:hidden"><span class="t" style="left:0.0px;top:3px;transform:scaleX(1.1623);transform-origin:0 0">http://</span><span class="t" style="left:32.0px;top:3px;transform:scaleX(1.2011);transform-origin:0 0">1ttv</span><span class="t" style="left:53.3px;top:3px;transform:scaleX(1.0745);transform-origin:0 0">.net/</span><span class="t" style="left:76.3px;top:3px;transform:scaleX(0.9812);transform-origin:0 0">iframe.php?</span><span class="t" style="left:133.3px;top:3px;transform:scaleX(0.9648);transform-origin:0 0">site=873&amp;</span><span class="t" style="left:180.8px;top:3px;transform:scaleX(1.0341);transform-origin:0 0">channel=</span><span class="t" style="left:227.300px;top:3px">5</span></div>
<div class="vs" style="left:210px;background:#587486"></div>
<div class="vs" style="left:320px;background:#587486"></div>
<div class="vs" style="left:394px;background:#587486"></div>
<div class="vs" style="left:484px;background:#587486"></div>
<div class="vs" style="left:719px;background:#587486"></div>
<div class="vs" style="left:817px;background:#587486"></div>
</div>
<div class="row" style="top:200px;background:#ffffff;border-color:#587486">
<div class="pm" style="left:3px;top:4px"><i></i><b></b></div>
<svg style="left:21px;top:1px" width="14" height="15" viewBox="0 0 14 15"><use href="#fm"/></svg>
<svg style="left:401px;top:3px" width="78" height="15" viewBox="0 0 78 15"><use href="#st3"/></svg>
<div style="left:487px;top:0;width:228.500px;height:19px;overflow:hidden"><span class="t" style="left:0.0px;top:3px;transform:scaleX(1.1623);transform-origin:0 0">http://</span><span class="t" style="left:32.0px;top:3px;transform:scaleX(1.2011);transform-origin:0 0">1ttv</span><span class="t" style="left:53.3px;top:3px;transform:scaleX(1.0745);transform-origin:0 0">.net/</span><span class="t" style="left:76.3px;top:3px;transform:scaleX(0.9812);transform-origin:0 0">iframe.php?</span><span class="t" style="left:133.3px;top:3px;transform:scaleX(0.9648);transform-origin:0 0">site=873&amp;</span><span class="t" style="left:180.8px;top:3px;transform:scaleX(1.0341);transform-origin:0 0">channel=</span><span class="t" style="left:227.300px;top:3px">6</span></div>
<div class="vs" style="left:210px;background:#587486"></div>
<div class="vs" style="left:320px;background:#587486"></div>
<div class="vs" style="left:394px;background:#587486"></div>
<div class="vs" style="left:484px;background:#587486"></div>
<div class="vs" style="left:719px;background:#587486"></div>
<div class="vs" style="left:817px;background:#587486"></div>
</div>
<div class="row" style="top:220px;background:#c4d9e9;border-color:#587486">
<div class="pm" style="left:3px;top:4px"><i></i><b></b></div>
<svg style="left:21px;top:1px" width="14" height="15" viewBox="0 0 14 15"><use href="#fm"/></svg>
<div style="left:40px;top:0;width:168px;height:19px;overflow:hidden"><div class="t" style="left:0;top:3px;transform:scaleX(0.9485);transform-origin:0 0">FOX - Т/С &amp;QUOT;ГОТЭМ&amp;QUOT;, </div></div>
<svg style="left:401px;top:3px" width="78" height="15" viewBox="0 0 78 15"><use href="#st3"/></svg>
<div style="left:487px;top:0;width:228.500px;height:19px;overflow:hidden"><span class="t" style="left:0.0px;top:3px;transform:scaleX(1.1623);transform-origin:0 0">http://</span><span class="t" style="left:32.0px;top:3px;transform:scaleX(1.2011);transform-origin:0 0">1ttv</span><span class="t" style="left:53.3px;top:3px;transform:scaleX(1.0745);transform-origin:0 0">.net/</span><span class="t" style="left:76.3px;top:3px;transform:scaleX(0.9812);transform-origin:0 0">iframe.php?</span><span class="t" style="left:133.3px;top:3px;transform:scaleX(0.9648);transform-origin:0 0">site=873&amp;</span><span class="t" style="left:180.8px;top:3px;transform:scaleX(1.0341);transform-origin:0 0">channel=</span><span class="t" style="left:227.300px;top:3px">4</span></div>
<div class="vs" style="left:210px;background:#587486"></div>
<div class="vs" style="left:320px;background:#587486"></div>
<div class="vs" style="left:394px;background:#587486"></div>
<div class="vs" style="left:484px;background:#587486"></div>
<div class="vs" style="left:719px;background:#587486"></div>
<div class="vs" style="left:817px;background:#587486"></div>
</div>
<div class="row" style="top:240px;background:#ffffff;border-color:#587486">
<div class="pm" style="left:3px;top:4px"><i></i><b></b></div>
<svg style="left:21px;top:1px" width="14" height="15" viewBox="0 0 14 15"><use href="#fm"/></svg>
<div style="left:40px;top:0;width:168px;height:19px;overflow:hidden"><div class="t" style="left:0;top:3px;transform:scaleX(0.9448);transform-origin:0 0">КОМЕДИЯ ТВ - СКЕТЧ-ШОУ &amp;QUO</div></div>
<svg style="left:401px;top:3px" width="78" height="15" viewBox="0 0 78 15"><use href="#st3"/></svg>
<div style="left:487px;top:0;width:228.500px;height:19px;overflow:hidden"><span class="t" style="left:0.0px;top:3px;transform:scaleX(1.1623);transform-origin:0 0">http://</span><span class="t" style="left:32.0px;top:3px;transform:scaleX(1.2011);transform-origin:0 0">1ttv</span><span class="t" style="left:53.3px;top:3px;transform:scaleX(1.0745);transform-origin:0 0">.net/</span><span class="t" style="left:76.3px;top:3px;transform:scaleX(0.9812);transform-origin:0 0">iframe.php?</span><span class="t" style="left:133.3px;top:3px;transform:scaleX(0.9648);transform-origin:0 0">site=873&amp;</span><span class="t" style="left:180.8px;top:3px;transform:scaleX(1.0341);transform-origin:0 0">channel=</span><span class="t" style="left:227.300px;top:3px">1</span></div>
<div class="vs" style="left:210px;background:#587486"></div>
<div class="vs" style="left:320px;background:#587486"></div>
<div class="vs" style="left:394px;background:#587486"></div>
<div class="vs" style="left:484px;background:#587486"></div>
<div class="vs" style="left:719px;background:#587486"></div>
<div class="vs" style="left:817px;background:#587486"></div>
</div>
<div class="row" style="top:260px;background:#c4d9e9;border-color:#587486">
<div class="pm" style="left:3px;top:4px"><i></i><b></b></div>
<svg style="left:21px;top:1px" width="14" height="15" viewBox="0 0 14 15"><use href="#fm"/></svg>
<div style="left:40px;top:0;width:168px;height:19px;overflow:hidden"><div class="t" style="left:0;top:3px;transform:scaleX(0.9563);transform-origin:0 0">КИНОКЛУБ - Х/Ф &amp;QUOT;РАСКРАШ</div></div>
<svg style="left:401px;top:3px" width="78" height="15" viewBox="0 0 78 15"><use href="#st3"/></svg>
<div style="left:487px;top:0;width:228.500px;height:19px;overflow:hidden"><span class="t" style="left:0.0px;top:3px;transform:scaleX(1.1623);transform-origin:0 0">http://</span><span class="t" style="left:32.0px;top:3px;transform:scaleX(1.2011);transform-origin:0 0">1ttv</span><span class="t" style="left:53.3px;top:3px;transform:scaleX(1.0745);transform-origin:0 0">.net/</span><span class="t" style="left:76.3px;top:3px;transform:scaleX(0.9812);transform-origin:0 0">iframe.php?</span><span class="t" style="left:133.3px;top:3px;transform:scaleX(0.9648);transform-origin:0 0">site=873&amp;</span><span class="t" style="left:180.8px;top:3px;transform:scaleX(1.0341);transform-origin:0 0">channel=</span><span class="t" style="left:227.300px;top:3px">2</span></div>
<div class="vs" style="left:210px;background:#587486"></div>
<div class="vs" style="left:320px;background:#587486"></div>
<div class="vs" style="left:394px;background:#587486"></div>
<div class="vs" style="left:484px;background:#587486"></div>
<div class="vs" style="left:719px;background:#587486"></div>
<div class="vs" style="left:817px;background:#587486"></div>
</div>
<div class="row" style="top:280px;background:#ffffff;border-color:#587486">
<div class="pm" style="left:3px;top:4px"><i></i><b></b></div>
<svg style="left:21px;top:1px" width="14" height="15" viewBox="0 0 14 15"><use href="#fm"/></svg>
<div style="left:40px;top:0;width:168px;height:19px;overflow:hidden"><div class="t" style="left:0;top:3px;transform:scaleX(0.9337);transform-origin:0 0">ДОМ КИНО - Х/Ф &amp;QUOT;ИРОНИЯ </div></div>
<svg style="left:401px;top:3px" width="78" height="15" viewBox="0 0 78 15"><use href="#st3"/></svg>
<div style="left:487px;top:0;width:228.500px;height:19px;overflow:hidden"><span class="t" style="left:0.0px;top:3px;transform:scaleX(1.1623);transform-origin:0 0">http://</span><span class="t" style="left:32.0px;top:3px;transform:scaleX(1.2011);transform-origin:0 0">1ttv</span><span class="t" style="left:53.3px;top:3px;transform:scaleX(1.0745);transform-origin:0 0">.net/</span><span class="t" style="left:76.3px;top:3px;transform:scaleX(0.9812);transform-origin:0 0">iframe.php?</span><span class="t" style="left:133.3px;top:3px;transform:scaleX(0.9648);transform-origin:0 0">site=873&amp;</span><span class="t" style="left:180.8px;top:3px;transform:scaleX(1.0341);transform-origin:0 0">channel=</span><span class="t" style="left:227.300px;top:3px">9</span></div>
<div class="vs" style="left:210px;background:#587486"></div>
<div class="vs" style="left:320px;background:#587486"></div>
<div class="vs" style="left:394px;background:#587486"></div>
<div class="vs" style="left:484px;background:#587486"></div>
<div class="vs" style="left:719px;background:#587486"></div>
<div class="vs" style="left:817px;background:#587486"></div>
</div>
<div class="row" style="top:300px;background:#c4d9e9;border-color:#587486">
<div class="pm" style="left:3px;top:4px"><i></i><b></b></div>
<svg style="left:21px;top:1px" width="14" height="15" viewBox="0 0 14 15"><use href="#fm"/></svg>
<div style="left:40px;top:0;width:168px;height:19px;overflow:hidden"><div class="t" style="left:0;top:3px;transform:scaleX(0.9522);transform-origin:0 0">КИНО ПЛЮС - Х/Ф &amp;QUOT;(НЕ)ЖД</div></div>
<svg style="left:401px;top:3px" width="78" height="15" viewBox="0 0 78 15"><use href="#st3"/></svg>
<div style="left:487px;top:0;width:228.500px;height:19px;overflow:hidden"><span class="t" style="left:0.0px;top:3px;transform:scaleX(1.1623);transform-origin:0 0">http://</span><span class="t" style="left:32.0px;top:3px;transform:scaleX(1.2011);transform-origin:0 0">1ttv</span><span class="t" style="left:53.3px;top:3px;transform:scaleX(1.0745);transform-origin:0 0">.net/</span><span class="t" style="left:76.3px;top:3px;transform:scaleX(0.9812);transform-origin:0 0">iframe.php?</span><span class="t" style="left:133.3px;top:3px;transform:scaleX(0.9648);transform-origin:0 0">site=873&amp;</span><span class="t" style="left:180.8px;top:3px;transform:scaleX(1.0341);transform-origin:0 0">channel=</span><span class="t" style="left:227.300px;top:3px">7</span></div>
<div class="vs" style="left:210px;background:#587486"></div>
<div class="vs" style="left:320px;background:#587486"></div>
<div class="vs" style="left:394px;background:#587486"></div>
<div class="vs" style="left:484px;background:#587486"></div>
<div class="vs" style="left:719px;background:#587486"></div>
<div class="vs" style="left:817px;background:#587486"></div>
</div>
<div class="row" style="top:320px;background:#ffffff;border-color:#587486">
<div class="pm" style="left:3px;top:4px"><i></i><b></b></div>
<svg style="left:21px;top:1px" width="14" height="15" viewBox="0 0 14 15"><use href="#fm"/></svg>
<div style="left:40px;top:0;width:168px;height:19px;overflow:hidden"><div class="t" style="left:0;top:3px;transform:scaleX(0.9428);transform-origin:0 0">TV1000 - Х/Ф &amp;QUOT;ЭРИН БРОКО</div></div>
<svg style="left:401px;top:3px" width="78" height="15" viewBox="0 0 78 15"><use href="#st3"/></svg>
<div style="left:487px;top:0;width:228.500px;height:19px;overflow:hidden"><span class="t" style="left:0.0px;top:3px;transform:scaleX(1.1623);transform-origin:0 0">http://</span><span class="t" style="left:32.0px;top:3px;transform:scaleX(1.2011);transform-origin:0 0">1ttv</span><span class="t" style="left:53.3px;top:3px;transform:scaleX(1.0745);transform-origin:0 0">.net/</span><span class="t" style="left:76.3px;top:3px;transform:scaleX(0.9812);transform-origin:0 0">iframe.php?</span><span class="t" style="left:133.3px;top:3px;transform:scaleX(0.9648);transform-origin:0 0">site=873&amp;</span><span class="t" style="left:180.8px;top:3px;transform:scaleX(1.0341);transform-origin:0 0">channel=</span><span class="t" style="left:227.300px;top:3px">6</span></div>
<div class="vs" style="left:210px;background:#587486"></div>
<div class="vs" style="left:320px;background:#587486"></div>
<div class="vs" style="left:394px;background:#587486"></div>
<div class="vs" style="left:484px;background:#587486"></div>
<div class="vs" style="left:719px;background:#587486"></div>
<div class="vs" style="left:817px;background:#587486"></div>
</div>
<div class="row" style="top:340px;background:#c4d9e9;border-color:#587486">
<div class="pm" style="left:3px;top:4px"><i></i><b></b></div>
<svg style="left:21px;top:1px" width="14" height="15" viewBox="0 0 14 15"><use href="#fm"/></svg>
<div style="left:40px;top:0;width:168px;height:19px;overflow:hidden"><div class="t" style="left:0;top:3px;transform:scaleX(0.9552);transform-origin:0 0">AXN SCI-FI - Т/С &amp;QUOT;ФАРГО&amp;Q</div></div>
<svg style="left:401px;top:3px" width="78" height="15" viewBox="0 0 78 15"><use href="#st3"/></svg>
<div style="left:487px;top:0;width:228.500px;height:19px;overflow:hidden"><span class="t" style="left:0.0px;top:3px;transform:scaleX(1.1623);transform-origin:0 0">http://</span><span class="t" style="left:32.0px;top:3px;transform:scaleX(1.2011);transform-origin:0 0">1ttv</span><span class="t" style="left:53.3px;top:3px;transform:scaleX(1.0745);transform-origin:0 0">.net/</span><span class="t" style="left:76.3px;top:3px;transform:scaleX(0.9812);transform-origin:0 0">iframe.php?</span><span class="t" style="left:133.3px;top:3px;transform:scaleX(0.9648);transform-origin:0 0">site=873&amp;</span><span class="t" style="left:180.8px;top:3px;transform:scaleX(1.0341);transform-origin:0 0">channel=</span><span class="t" style="left:227.300px;top:3px">4</span></div>
<div class="vs" style="left:210px;background:#587486"></div>
<div class="vs" style="left:320px;background:#587486"></div>
<div class="vs" style="left:394px;background:#587486"></div>
<div class="vs" style="left:484px;background:#587486"></div>
<div class="vs" style="left:719px;background:#587486"></div>
<div class="vs" style="left:817px;background:#587486"></div>
</div>
<div class="row" style="top:360px;background:#ffffff;border-color:#587486">
<div class="pm" style="left:3px;top:4px"><i></i><b></b></div>
<svg style="left:21px;top:1px" width="14" height="15" viewBox="0 0 14 15"><use href="#fm"/></svg>
<div style="left:40px;top:0;width:168px;height:19px;overflow:hidden"><div class="t" style="left:0;top:3px;transform:scaleX(0.9196);transform-origin:0 0">XXI - Х/Ф &amp;QUOT;ТАИНСТВЕННЫЙ </div></div>
<svg style="left:401px;top:3px" width="78" height="15" viewBox="0 0 78 15"><use href="#st3"/></svg>
<div style="left:487px;top:0;width:228.500px;height:19px;overflow:hidden"><span class="t" style="left:0.0px;top:3px;transform:scaleX(1.1623);transform-origin:0 0">http://</span><span class="t" style="left:32.0px;top:3px;transform:scaleX(1.2011);transform-origin:0 0">1ttv</span><span class="t" style="left:53.3px;top:3px;transform:scaleX(1.0745);transform-origin:0 0">.net/</span><span class="t" style="left:76.3px;top:3px;transform:scaleX(0.9812);transform-origin:0 0">iframe.php?</span><span class="t" style="left:133.3px;top:3px;transform:scaleX(0.9648);transform-origin:0 0">site=873&amp;</span><span class="t" style="left:180.8px;top:3px;transform:scaleX(1.0341);transform-origin:0 0">channel=</span><span class="t" style="left:227.300px;top:3px">5</span></div>
<div class="vs" style="left:210px;background:#587486"></div>
<div class="vs" style="left:320px;background:#587486"></div>
<div class="vs" style="left:394px;background:#587486"></div>
<div class="vs" style="left:484px;background:#587486"></div>
<div class="vs" style="left:719px;background:#587486"></div>
<div class="vs" style="left:817px;background:#587486"></div>
</div>
<div class="row" style="top:380px;background:#c4d9e9;border-color:#587486">
<div class="pm" style="left:3px;top:4px"><i></i><b></b></div>
<svg style="left:21px;top:1px" width="14" height="15" viewBox="0 0 14 15"><use href="#fm"/></svg>
<div style="left:40px;top:0;width:168px;height:19px;overflow:hidden"><div class="t" style="left:0;top:3px;transform:scaleX(0.9543);transform-origin:0 0">ИЛЛЮЗИОН+ - Х/Ф &amp;QUOT;НЬЮ-Й</div></div>
<svg style="left:401px;top:3px" width="78" height="15" viewBox="0 0 78 15"><use href="#st3"/></svg>
<div style="left:487px;top:0;width:228.500px;height:19px;overflow:hidden"><span class="t" style="left:0.0px;top:3px;transform:scaleX(1.1623);transform-origin:0 0">http://</span><span class="t" style="left:32.0px;top:3px;transform:scaleX(1.2011);transform-origin:0 0">1ttv</span><span class="t" style="left:53.3px;top:3px;transform:scaleX(1.0745);transform-origin:0 0">.net/</span><span class="t" style="left:76.3px;top:3px;transform:scaleX(0.9812);transform-origin:0 0">iframe.php?</span><span class="t" style="left:133.3px;top:3px;transform:scaleX(0.9648);transform-origin:0 0">site=873&amp;</span><span class="t" style="left:180.8px;top:3px;transform:scaleX(1.0341);transform-origin:0 0">channel=</span><span class="t" style="left:227.300px;top:3px">1</span></div>
<div class="vs" style="left:210px;background:#587486"></div>
<div class="vs" style="left:320px;background:#587486"></div>
<div class="vs" style="left:394px;background:#587486"></div>
<div class="vs" style="left:484px;background:#587486"></div>
<div class="vs" style="left:719px;background:#587486"></div>
<div class="vs" style="left:817px;background:#587486"></div>
</div>
<div class="row" style="top:400px;background:#ffffff;border-color:#587486">
<div class="pm" style="left:3px;top:4px"><i></i><b></b></div>
<svg style="left:21px;top:1px" width="14" height="15" viewBox="0 0 14 15"><use href="#fm"/></svg>
<div style="left:40px;top:0;width:168px;height:19px;overflow:hidden"><div class="t" style="left:0;top:3px;transform:scaleX(0.9366);transform-origin:0 0">ЕВРОКИНО - К/Ф &amp;QUOT;НОЖНИЦ</div></div>
<svg style="left:401px;top:3px" width="78" height="15" viewBox="0 0 78 15"><use href="#st3"/></svg>
<div style="left:487px;top:0;width:228.500px;height:19px;overflow:hidden"><span class="t" style="left:0.0px;top:3px;transform:scaleX(1.1623);transform-origin:0 0">http://</span><span class="t" style="left:32.0px;top:3px;transform:scaleX(1.2011);transform-origin:0 0">1ttv</span><span class="t" style="left:53.3px;top:3px;transform:scaleX(1.0745);transform-origin:0 0">.net/</span><span class="t" style="left:76.3px;top:3px;transform:scaleX(0.9812);transform-origin:0 0">iframe.php?</span><span class="t" style="left:133.3px;top:3px;transform:scaleX(0.9648);transform-origin:0 0">site=873&amp;</span><span class="t" style="left:180.8px;top:3px;transform:scaleX(1.0341);transform-origin:0 0">channel=</span><span class="t" style="left:227.300px;top:3px">2</span></div>
<div class="vs" style="left:210px;background:#587486"></div>
<div class="vs" style="left:320px;background:#587486"></div>
<div class="vs" style="left:394px;background:#587486"></div>
<div class="vs" style="left:484px;background:#587486"></div>
<div class="vs" style="left:719px;background:#587486"></div>
<div class="vs" style="left:817px;background:#587486"></div>
</div>
<div class="row" style="top:420px;background:#c4d9e9;border-color:#587486">
<div class="pm" style="left:3px;top:4px"><i></i><b></b></div>
<svg style="left:21px;top:1px" width="14" height="15" viewBox="0 0 14 15"><use href="#fm"/></svg>
<div style="left:40px;top:0;width:168px;height:19px;overflow:hidden"><div class="t" style="left:0;top:3px;transform:scaleX(0.9221);transform-origin:0 0">AMEDIA 1 - DEPECHE MODE: КОНЦ</div></div>
<svg style="left:401px;top:3px" width="78" height="15" viewBox="0 0 78 15"><use href="#st3"/></svg>
<div style="left:487px;top:0;width:228.500px;height:19px;overflow:hidden"><span class="t" style="left:0.0px;top:3px;transform:scaleX(1.1623);transform-origin:0 0">http://</span><span class="t" style="left:32.0px;top:3px;transform:scaleX(1.2011);transform-origin:0 0">1ttv</span><span class="t" style="left:53.3px;top:3px;transform:scaleX(1.0745);transform-origin:0 0">.net/</span><span class="t" style="left:76.3px;top:3px;transform:scaleX(0.9812);transform-origin:0 0">iframe.php?</span><span class="t" style="left:133.3px;top:3px;transform:scaleX(0.9648);transform-origin:0 0">site=873&amp;</span><span class="t" style="left:180.8px;top:3px;transform:scaleX(1.0341);transform-origin:0 0">channel=</span><span class="t" style="left:227.300px;top:3px">5</span></div>
<div class="vs" style="left:210px;background:#587486"></div>
<div class="vs" style="left:320px;background:#587486"></div>
<div class="vs" style="left:394px;background:#587486"></div>
<div class="vs" style="left:484px;background:#587486"></div>
<div class="vs" style="left:719px;background:#587486"></div>
<div class="vs" style="left:817px;background:#587486"></div>
</div>
<div class="row" style="top:440px;background:#ffffff;border-color:#587486">
<div class="pm" style="left:3px;top:4px"><i></i><b></b></div>
<svg style="left:21px;top:1px" width="14" height="15" viewBox="0 0 14 15"><use href="#fm"/></svg>
<div style="left:40px;top:0;width:168px;height:19px;overflow:hidden"><div class="t" style="left:0;top:3px;transform:scaleX(0.9581);transform-origin:0 0">FOX LIFE - Т/С &amp;QUOT;ОДНАЖДЫ</div></div>
<svg style="left:401px;top:3px" width="78" height="15" viewBox="0 0 78 15"><use href="#st3"/></svg>
<div style="left:487px;top:0;width:228.500px;height:19px;overflow:hidden"><span class="t" style="left:0.0px;top:3px;transform:scaleX(1.1623);transform-origin:0 0">http://</span><span class="t" style="left:32.0px;top:3px;transform:scaleX(1.2011);transform-origin:0 0">1ttv</span><span class="t" style="left:53.3px;top:3px;transform:scaleX(1.0745);transform-origin:0 0">.net/</span><span class="t" style="left:76.3px;top:3px;transform:scaleX(0.9812);transform-origin:0 0">iframe.php?</span><span class="t" style="left:133.3px;top:3px;transform:scaleX(0.9648);transform-origin:0 0">site=873&amp;</span><span class="t" style="left:180.8px;top:3px;transform:scaleX(1.0341);transform-origin:0 0">channel=</span><span class="t" style="left:227.300px;top:3px">4</span></div>
<div class="vs" style="left:210px;background:#587486"></div>
<div class="vs" style="left:320px;background:#587486"></div>
<div class="vs" style="left:394px;background:#587486"></div>
<div class="vs" style="left:484px;background:#587486"></div>
<div class="vs" style="left:719px;background:#587486"></div>
<div class="vs" style="left:817px;background:#587486"></div>
</div>
<div class="row" style="top:460px;background:#c4d9e9;border-color:#587486">
<div class="pm" style="left:3px;top:4px"><i></i><b></b></div>
<svg style="left:21px;top:1px" width="14" height="15" viewBox="0 0 14 15"><use href="#fm"/></svg>
<div style="left:40px;top:0;width:168px;height:19px;overflow:hidden"><div class="t" style="left:0;top:3px;transform:scaleX(0.9345);transform-origin:0 0">РУССКИЙ ИЛЛЮЗИОН - Х/Ф &amp;QUO</div></div>
<svg style="left:401px;top:3px" width="78" height="15" viewBox="0 0 78 15"><use href="#st3"/></svg>
<div style="left:487px;top:0;width:228.500px;height:19px;overflow:hidden"><span class="t" style="left:0.0px;top:3px;transform:scaleX(1.1623);transform-origin:0 0">http://</span><span class="t" style="left:32.0px;top:3px;transform:scaleX(1.2011);transform-origin:0 0">1ttv</span><span class="t" style="left:53.3px;top:3px;transform:scaleX(1.0745);transform-origin:0 0">.net/</span><span class="t" style="left:76.3px;top:3px;transform:scaleX(0.9812);transform-origin:0 0">iframe.php?</span><span class="t" style="left:133.3px;top:3px;transform:scaleX(0.9648);transform-origin:0 0">site=873&amp;</span><span class="t" style="left:180.8px;top:3px;transform:scaleX(1.0341);transform-origin:0 0">channel=</span><span class="t" style="left:227.300px;top:3px">1</span></div>
<div class="vs" style="left:210px;background:#587486"></div>
<div class="vs" style="left:320px;background:#587486"></div>
<div class="vs" style="left:394px;background:#587486"></div>
<div class="vs" style="left:484px;background:#587486"></div>
<div class="vs" style="left:719px;background:#587486"></div>
<div class="vs" style="left:817px;background:#587486"></div>
</div>
<div class="row" style="top:480px;background:#ffffff;border-color:#587486">
<div class="pm" style="left:3px;top:4px"><i></i><b></b></div>
<svg style="left:21px;top:1px" width="14" height="15" viewBox="0 0 14 15"><use href="#fm"/></svg>
<div style="left:40px;top:0;width:168px;height:19px;overflow:hidden"><div class="t" style="left:0;top:3px;transform:scaleX(0.9533);transform-origin:0 0">ФЕНИКС+ КИНО - Т/С &amp;QUOT;БРА</div></div>
<svg style="left:401px;top:3px" width="78" height="15" viewBox="0 0 78 15"><use href="#st3"/></svg>
<div style="left:487px;top:0;width:228.500px;height:19px;overflow:hidden"><span class="t" style="left:0.0px;top:3px;transform:scaleX(1.1623);transform-origin:0 0">http://</span><span class="t" style="left:32.0px;top:3px;transform:scaleX(1.2011);transform-origin:0 0">1ttv</span><span class="t" style="left:53.3px;top:3px;transform:scaleX(1.0745);transform-origin:0 0">.net/</span><span class="t" style="left:76.3px;top:3px;transform:scaleX(0.9812);transform-origin:0 0">iframe.php?</span><span class="t" style="left:133.3px;top:3px;transform:scaleX(0.9648);transform-origin:0 0">site=873&amp;</span><span class="t" style="left:180.8px;top:3px;transform:scaleX(1.0341);transform-origin:0 0">channel=</span><span class="t" style="left:227.300px;top:3px">3</span></div>
<div class="vs" style="left:210px;background:#587486"></div>
<div class="vs" style="left:320px;background:#587486"></div>
<div class="vs" style="left:394px;background:#587486"></div>
<div class="vs" style="left:484px;background:#587486"></div>
<div class="vs" style="left:719px;background:#587486"></div>
<div class="vs" style="left:817px;background:#587486"></div>
</div>
<div class="row" style="top:500px;background:#c4d9e9;border-color:#587486">
<div class="pm" style="left:3px;top:4px"><i></i><b></b></div>
<svg style="left:21px;top:1px" width="14" height="15" viewBox="0 0 14 15"><use href="#fm"/></svg>
<div style="left:40px;top:0;width:168px;height:19px;overflow:hidden"><div class="t" style="left:0;top:3px;transform:scaleX(0.9416);transform-origin:0 0">КИНО СОЮЗ - КАНАЛ ПРЕКРАТИЛ</div></div>
<svg style="left:401px;top:3px" width="78" height="15" viewBox="0 0 78 15"><use href="#st3"/></svg>
<div style="left:487px;top:0;width:228.500px;height:19px;overflow:hidden"><span class="t" style="left:0.0px;top:3px;transform:scaleX(1.1623);transform-origin:0 0">http://</span><span class="t" style="left:32.0px;top:3px;transform:scaleX(1.2011);transform-origin:0 0">1ttv</span><span class="t" style="left:53.3px;top:3px;transform:scaleX(1.0745);transform-origin:0 0">.net/</span><span class="t" style="left:76.3px;top:3px;transform:scaleX(0.9812);transform-origin:0 0">iframe.php?</span><span class="t" style="left:133.3px;top:3px;transform:scaleX(0.9648);transform-origin:0 0">site=873&amp;</span><span class="t" style="left:180.8px;top:3px;transform:scaleX(1.0341);transform-origin:0 0">channel=</span><span class="t" style="left:227.300px;top:3px">7</span></div>
<div class="vs" style="left:210px;background:#587486"></div>
<div class="vs" style="left:320px;background:#587486"></div>
<div class="vs" style="left:394px;background:#587486"></div>
<div class="vs" style="left:484px;background:#587486"></div>
<div class="vs" style="left:719px;background:#587486"></div>
<div class="vs" style="left:817px;background:#587486"></div>
</div>
<div class="row" style="top:520px;background:#ffffff;border-color:#587486">
<div class="pm" style="left:3px;top:4px"><i></i><b></b></div>
<svg style="left:21px;top:1px" width="14" height="15" viewBox="0 0 14 15"><use href="#fm"/></svg>
<div style="left:40px;top:0;width:168px;height:19px;overflow:hidden"><div class="t" style="left:0;top:3px;transform:scaleX(0.9189);transform-origin:0 0">ENTER-ФИЛЬМ - ЖАРТ ЗА ЖАРТОМ</div></div>
<svg style="left:401px;top:3px" width="78" height="15" viewBox="0 0 78 15"><use href="#st3"/></svg>
<div style="left:487px;top:0;width:228.500px;height:19px;overflow:hidden"><span class="t" style="left:0.0px;top:3px;transform:scaleX(1.1623);transform-origin:0 0">http://</span><span class="t" style="left:32.0px;top:3px;transform:scaleX(1.2011);transform-origin:0 0">1ttv</span><span class="t" style="left:53.3px;top:3px;transform:scaleX(1.0745);transform-origin:0 0">.net/</span><span class="t" style="left:76.3px;top:3px;transform:scaleX(0.9812);transform-origin:0 0">iframe.php?</span><span class="t" style="left:133.3px;top:3px;transform:scaleX(0.9648);transform-origin:0 0">site=873&amp;</span><span class="t" style="left:180.8px;top:3px;transform:scaleX(1.0341);transform-origin:0 0">channel=</span><span class="t" style="left:227.300px;top:3px">8</span></div>
<div class="vs" style="left:210px;background:#587486"></div>
<div class="vs" style="left:320px;background:#587486"></div>
<div class="vs" style="left:394px;background:#587486"></div>
<div class="vs" style="left:484px;background:#587486"></div>
<div class="vs" style="left:719px;background:#587486"></div>
<div class="vs" style="left:817px;background:#587486"></div>
</div>
</div>
<div style="left:866px;top:692px;width:909px;height:19px;background:#efefef"></div>
<div style="left:866px;top:692px;width:51px;height:19px;background:linear-gradient(#90a8b8,#8098a9)"></div>
<div style="left:917px;top:692px;width:51px;height:19px;background:linear-gradient(#8aa2b2,#6d8596 55%,#647c8d)"></div>
<div style="left:934px;top:692px;width:1px;height:19px;background:#56707f"></div>
<div style="left:951px;top:692px;width:1px;height:19px;background:#56707f"></div>
<div style="left:917px;top:692px;width:1px;height:19px;background:#56707f"></div>
<svg style="left:866px;top:692px" width="102" height="19" viewBox="0 0 102 19"><g fill="#3d4d5a"><rect x="4" y="5" width="1.500" height="9"/><path d="M10 5 v9 l-4.500 -4.500z M14.500 5 v9 l-4.500 -4.500z"/><path d="M25 5 v9 l-4.500 -4.500z M30 5 v9 l-4.500 -4.500z"/><path d="M44 5 v9 l-4.500 -4.500z"/></g><g fill="#000"><path d="M58 5 v9 l4.500 -4.500z"/><path d="M72 5 v9 l4.500 -4.500z M77 5 v9 l4.500 -4.500z"/><path d="M88 5 v9 l4.500 -4.500z M92.500 5 v9 l4.500 -4.500z"/><rect x="97" y="5" width="1.500" height="9"/></g></svg>
<svg style="left:972px;top:697px" width="6" height="9" viewBox="0 0 6 9"><path d="M5 .5 v8 l-4 -4z" fill="#404850"/></svg>
<div style="left:986px;top:693px;width:217px;height:16px;border:1px solid #a3a3a8;border-radius:3px;background:linear-gradient(#f8f8f8,#e8e8ea 50%,#d6d6da)"></div>
<div style="left:1090px;top:697px;width:7px;height:7px;background:repeating-linear-gradient(90deg,#50585f 0 1px,transparent 1px 3px)"></div>
<div style="left:0;top:711px;width:1775px;height:30px;background:linear-gradient(#aac1d0 0%,#9fb7c7 15%,#8ea6b6 35%,#7c94a5 55%,#70889a 75%,#6a8293 100%)"></div>
<div style="left:0;top:711px;width:2px;height:105px;background:#748c9c"></div>
<div style="left:862px;top:692px;width:4px;height:48px;background:linear-gradient(90deg,#9fb6c5,#6e8797)"></div>
<div style="left:0;top:740px;width:1775px;height:1px;background:#3f5767"></div>
<svg style="left:7px;top:715px" width="16" height="16" viewBox="0 0 16 16"><path d="M2 4.500 L8 2 L14 4.500 L14 11.500 L8 14.500 L2 11.500Z" fill="#c9981f" stroke="#8a6410" stroke-width=".7"/><path d="M2 4.500 L8 7 L14 4.500 M8 7 V14.500" stroke="#f2d060" stroke-width=".9" fill="none"/><path d="M5 3.300 L11 5.800 V9" stroke="#f7e08a" stroke-width="1" fill="none"/><path d="M4 9 l2.500 2.500 l6 -7" stroke="#3fae2a" stroke-width="2" fill="none"/><path d="M9 8 L14 2.500 L15.500 4 L10.500 9.500Z" fill="#e0483a"/></svg>
<svg style="left:32px;top:715px" width="16" height="16" viewBox="0 0 16 16"><path d="M2 4.500 L8 2 L14 4.500 L14 11.500 L8 14.500 L2 11.500Z" fill="#c9981f" stroke="#8a6410" stroke-width=".7"/><path d="M2 4.500 L8 7 L14 4.500 M8 7 V14.500" stroke="#f2d060" stroke-width=".9" fill="none"/><path d="M5 3.300 L11 5.800 V9" stroke="#f7e08a" stroke-width="1" fill="none"/><path d="M1.500 9.500 l5 5 M6.500 9.500 l-5 5" stroke="#e02a1a" stroke-width="2"/></svg>
<svg style="left:62px;top:715px" width="16" height="16" viewBox="0 0 16 16"><path d="M1.500 5 L6 4 L7 2 L11.500 1.500 L12 3.500 L14 3.500 L14 13 L3 13.500Z" fill="#f2d88a" stroke="#c9a23a" stroke-width=".7"/><path d="M3.500 6 L12.500 5 L12.500 13 L4.500 13.500Z" fill="#fbeeb8"/><circle cx="5" cy="12" r="3" fill="#f4f4f6"/><circle cx="9" cy="11" r="3.600" fill="#fafafc"/><circle cx="12.500" cy="12.500" r="2.500" fill="#ececf0"/><rect x="4" y="12" width="9" height="3" rx="1.500" fill="#f0f0f4"/></svg>
<svg style="left:91px;top:715px" width="16" height="16" viewBox="0 0 16 16"><circle cx="7" cy="6.500" r="4.500" fill="#f9b21a"/><circle cx="7" cy="6.500" r="3" fill="#fde04a"/><circle cx="5" cy="12" r="3" fill="#f4f4f6"/><circle cx="9" cy="11" r="3.600" fill="#fafafc"/><circle cx="12.500" cy="12.500" r="2.500" fill="#ececf0"/><rect x="4" y="12" width="9" height="3" rx="1.500" fill="#f0f0f4"/></svg>
<svg style="left:122px;top:715px" width="16" height="16" viewBox="0 0 16 16"><rect x="1" y="1" width="14" height="14" fill="#e8f0f4"/><rect x="1.5" y="1.5" width="2" height="2" fill="#3f9a5a"/><rect x="4.3" y="1.5" width="2" height="2" fill="#7fb0e0"/><rect x="7.1" y="1.5" width="2" height="2" fill="#2a5fb0"/><rect x="9.9" y="1.5" width="2" height="2" fill="#1f3f80"/><rect x="12.7" y="1.5" width="2" height="2" fill="#1f3f80"/><rect x="1.5" y="4.3" width="2" height="2" fill="#3f9a5a"/><rect x="4.3" y="4.3" width="2" height="2" fill="#2a5fb0"/><rect x="7.1" y="4.3" width="2" height="2" fill="#2a5fb0"/><rect x="9.9" y="4.3" width="2" height="2" fill="#2a5fb0"/><rect x="12.7" y="4.3" width="2" height="2" fill="#1f3f80"/><rect x="1.5" y="7.1" width="2" height="2" fill="#dfe8ee"/><rect x="4.3" y="7.1" width="2" height="2" fill="#7fb0e0"/><rect x="7.1" y="7.1" width="2" height="2" fill="#2a5fb0"/><rect x="9.9" y="7.1" width="2" height="2" fill="#3f9a5a"/><rect x="12.7" y="7.1" width="2" height="2" fill="#dfe8ee"/><rect x="1.5" y="9.9" width="2" height="2" fill="#dfe8ee"/><rect x="4.3" y="9.9" width="2" height="2" fill="#7fb0e0"/><rect x="7.1" y="9.9" width="2" height="2" fill="#7fb0e0"/><rect x="9.9" y="9.9" width="2" height="2" fill="#3f9a5a"/><rect x="12.7" y="9.9" width="2" height="2" fill="#2a5fb0"/><rect x="1.5" y="12.7" width="2" height="2" fill="#7fb0e0"/><rect x="4.3" y="12.7" width="2" height="2" fill="#3f9a5a"/><rect x="7.1" y="12.7" width="2" height="2" fill="#2a5fb0"/><rect x="9.9" y="12.7" width="2" height="2" fill="#7fb0e0"/><rect x="12.7" y="12.7" width="2" height="2" fill="#7fb0e0"/></svg>
<svg style="left:151px;top:715px" width="16" height="16" viewBox="0 0 16 16"><path d="M1.500 1.500 H13 L14.500 3 V14.500 H1.500Z" fill="#2a5fd0" stroke="#173a9a" stroke-width=".8"/><rect x="4" y="2" width="8" height="5.500" fill="#eef2f8"/><path d="M5 3.500 h6 M5 5.200 h6" stroke="#b0b8c8" stroke-width=".7"/><rect x="4.500" y="10" width="7" height="4.500" fill="#dfe4ee"/><rect x="6" y="10.800" width="2" height="3" fill="#2a4fb0"/></svg>
<svg style="left:176px;top:715px" width="16" height="16" viewBox="0 0 16 16"><path d="M1 6.500 L6 6 L7 4.500 L11 4.500 L11.500 6.500 L14.500 6.500 L14.500 14.500 L1 14.500Z" fill="#f4cc4a" stroke="#b8860a" stroke-width=".8"/><path d="M2 9 h11.500 v5 h-11.500z" fill="#fbe48a"/><path d="M6 2.500 Q11 1 12 6.500 L14.800 6 L11 10.500 L7.800 6.500 L10 6.800 Q9.500 3.800 6 2.500Z" fill="#2fae2a" stroke="#157a14" stroke-width=".6"/></svg>
<svg style="left:207px;top:715px" width="16" height="16" viewBox="0 0 16 16"><g transform="translate(8,8) scale(.88)"><g fill="#bcbce3" stroke="#8f8fc4" stroke-width=".6"><path d="M-1.900 -7.300 L1.900 -7.300 L2.400 -3.500 L-2.400 -3.500Z" transform="rotate(0)"/><path d="M-1.900 -7.300 L1.900 -7.300 L2.400 -3.500 L-2.400 -3.500Z" transform="rotate(45)"/><path d="M-1.900 -7.300 L1.900 -7.300 L2.400 -3.500 L-2.400 -3.500Z" transform="rotate(90)"/><path d="M-1.900 -7.300 L1.900 -7.300 L2.400 -3.500 L-2.400 -3.500Z" transform="rotate(135)"/><path d="M-1.900 -7.300 L1.900 -7.300 L2.400 -3.500 L-2.400 -3.500Z" transform="rotate(180)"/><path d="M-1.900 -7.300 L1.900 -7.300 L2.400 -3.500 L-2.400 -3.500Z" transform="rotate(225)"/><path d="M-1.900 -7.300 L1.900 -7.300 L2.400 -3.500 L-2.400 -3.500Z" transform="rotate(270)"/><path d="M-1.900 -7.300 L1.900 -7.300 L2.400 -3.500 L-2.400 -3.500Z" transform="rotate(315)"/></g><circle r="5.300" fill="#c3c3e8" stroke="#8f8fc4" stroke-width=".6"/><circle r="4" fill="#cdcdee"/><circle r="1.700" fill="#8a9bb0" stroke="#8f8fc4" stroke-width=".5"/></g></svg>
<svg style="left:236px;top:715px" width="16" height="16" viewBox="0 0 16 16"><circle cx="4.500" cy="4.500" r="3.300" fill="#f7d24a" stroke="#c99a1a" stroke-width=".9"/><circle cx="3.800" cy="3.800" r="1" fill="#8aa0b0"/><path d="M6.500 6.500 L14 13 L12.500 14.500 L11 13 L10 14 L8.500 12.500 L9.500 11.500 L5.500 8Z" fill="#f2c63a" stroke="#c99a1a" stroke-width=".7"/></svg>
<svg style="left:267px;top:715px" width="16" height="16" viewBox="0 0 16 16"><circle cx="10.500" cy="4" r="2.700" fill="#f2c48a" stroke="#c9964a" stroke-width=".5"/><path d="M6.500 13 Q6.500 7.500 10.500 7.500 Q14.500 7.500 14.500 13Z" fill="#4fbf3a" stroke="#2a8a1c" stroke-width=".5"/><circle cx="4.500" cy="7.500" r="2.500" fill="#6a3a1a"/><path d="M1 14.500 Q1 10 4.500 10 Q8 10 8 14.500Z" fill="#e8b02a" stroke="#b8800a" stroke-width=".5"/><circle cx="9" cy="10.500" r="1.800" fill="#d03a2a"/></svg>
<svg style="left:297px;top:715px" width="16" height="16" viewBox="0 0 16 16"><ellipse cx="8" cy="13.500" rx="6" ry="1.800" fill="#f4d04a"/><path d="M8 13 Q8.500 9 7.500 6" stroke="#b8862a" stroke-width="1.500" fill="none"/><path d="M7.500 6 Q4 3.500 1.500 6.500 M7.500 6 Q10 2 14 4.500 M7.500 6 Q6 2 3.500 1.500 M7.500 6 Q10.500 5.500 12.500 8.500 M7.500 6 Q4.500 7 3.500 9.500" stroke="#2f9e2a" stroke-width="1.700" fill="none" stroke-linecap="round"/></svg>
<svg style="left:869px;top:715px" width="16" height="16" viewBox="0 0 16 16"><path d="M1 6.500 L6 6 L7 4.500 L11 4.500 L11.500 6.500 L14.500 6.500 L14.500 14.500 L1 14.500Z" fill="#f4cc4a" stroke="#b8860a" stroke-width=".8"/><path d="M2 9 h11.500 v5 h-11.500z" fill="#fbe48a"/><path d="M6 2.500 Q11 1 12 6.500 L14.800 6 L11 10.500 L7.800 6.500 L10 6.800 Q9.500 3.800 6 2.500Z" fill="#2fae2a" stroke="#157a14" stroke-width=".6"/></svg>
<svg style="left:896px;top:715px" width="16" height="16" viewBox="0 0 16 16"><circle cx="7" cy="7.500" r="6" fill="#2f88d8" stroke="#1a5aa0" stroke-width=".7"/><path d="M3 5.500 q3 -3.500 6 -1.500 q1.500 2.500 -1 4 q-3 1.500 -5 -2.500z M8 10 q2 -1 3.500 .5 q-1 2 -3 2z" fill="#5fc84a"/><path d="M11.500 8.500 v6 M8.500 11.500 h6" stroke="#fff" stroke-width="3.200"/><path d="M11.500 9 v5 M9 11.500 h5" stroke="#2aa81a" stroke-width="1.800"/></svg>
<svg style="left:926px;top:715px" width="16" height="16" viewBox="0 0 16 16"><rect x="1.500" y="2.500" width="11" height="12" fill="#f6f8fa" stroke="#9aa6b0" stroke-width=".8"/><path d="M3.500 6 h7 M3.500 8.500 h7 M3.500 11 h5" stroke="#b8c4cc" stroke-width=".8"/><path d="M6.500 11.500 L7.200 8.800 L13.500 1.500 L15.300 3 L9 10.300Z" fill="#4fbf3a" stroke="#2a7a1c" stroke-width=".5"/><path d="M13.500 1.500 L15.300 3 L14.500 4 L12.700 2.500Z" fill="#e04a3a"/></svg>
<svg style="left:950px;top:715px" width="16" height="16" viewBox="0 0 16 16"><path d="M2 3 L14 3 L12.500 14.500 L3.500 14.500Z" fill="#cfe8f6" stroke="#7ab0d0" stroke-width=".8"/><ellipse cx="8" cy="3" rx="6" ry="1.600" fill="#e8f4fb" stroke="#7ab0d0" stroke-width=".7"/><path d="M6 8 l2 -2.500 l2 2.500 M10.500 9 l.5 3 l-3 0 M5.500 9.500 l-.3 2.500 l2 0" stroke="#2fae2a" stroke-width="1.400" fill="none"/></svg>
<svg style="left:975px;top:715px" width="16" height="16" viewBox="0 0 16 16"><path d="M2 3.500 L4.500 1.500 L8 5.500 L11.500 1.500 L14.500 3.500 L10.500 8 L14.500 12.500 L12 14.800 L8 10.500 L4.500 14.800 L1.500 12.500 L5.500 8Z" fill="#ea3a24" stroke="#b81c0c" stroke-width=".7"/></svg>
<svg style="left:1004px;top:715px" width="16" height="16" viewBox="0 0 16 16"><circle cx="7" cy="6.500" r="4.500" fill="#f9b21a"/><circle cx="7" cy="6.500" r="3" fill="#fde04a"/><circle cx="5" cy="12" r="3" fill="#f4f4f6"/><circle cx="9" cy="11" r="3.600" fill="#fafafc"/><circle cx="12.500" cy="12.500" r="2.500" fill="#ececf0"/><rect x="4" y="12" width="9" height="3" rx="1.500" fill="#f0f0f4"/></svg>
<svg style="left:1036px;top:715px" width="16" height="16" viewBox="0 0 16 16"><g transform="translate(8,8) scale(.88)"><g fill="#bcbce3" stroke="#8f8fc4" stroke-width=".6"><path d="M-1.900 -7.300 L1.900 -7.300 L2.400 -3.500 L-2.400 -3.500Z" transform="rotate(0)"/><path d="M-1.900 -7.300 L1.900 -7.300 L2.400 -3.500 L-2.400 -3.500Z" transform="rotate(45)"/><path d="M-1.900 -7.300 L1.900 -7.300 L2.400 -3.500 L-2.400 -3.500Z" transform="rotate(90)"/><path d="M-1.900 -7.300 L1.900 -7.300 L2.400 -3.500 L-2.400 -3.500Z" transform="rotate(135)"/><path d="M-1.900 -7.300 L1.900 -7.300 L2.400 -3.500 L-2.400 -3.500Z" transform="rotate(180)"/><path d="M-1.900 -7.300 L1.900 -7.300 L2.400 -3.500 L-2.400 -3.500Z" transform="rotate(225)"/><path d="M-1.900 -7.300 L1.900 -7.300 L2.400 -3.500 L-2.400 -3.500Z" transform="rotate(270)"/><path d="M-1.900 -7.300 L1.900 -7.300 L2.400 -3.500 L-2.400 -3.500Z" transform="rotate(315)"/></g><circle r="5.300" fill="#c3c3e8" stroke="#8f8fc4" stroke-width=".6"/><circle r="4" fill="#cdcdee"/><circle r="1.700" fill="#8a9bb0" stroke="#8f8fc4" stroke-width=".5"/></g><circle cx="11" cy="11" r="4.500" fill="#2a70e0" stroke="#fff" stroke-width=".8"/><rect x="10.300" y="8.200" width="1.500" height="3.500" fill="#fff"/><rect x="10.300" y="12.300" width="1.500" height="1.500" fill="#fff"/></svg>
<svg style="left:1060px;top:715px" width="16" height="16" viewBox="0 0 16 16"><g transform="translate(8,8)"><g fill="#e0541a"><path d="M-2 -4 L0 -8 L2 -4Z" transform="rotate(0)"/><path d="M-2 -4 L0 -8 L2 -4Z" transform="rotate(30)"/><path d="M-2 -4 L0 -8 L2 -4Z" transform="rotate(60)"/><path d="M-2 -4 L0 -8 L2 -4Z" transform="rotate(90)"/><path d="M-2 -4 L0 -8 L2 -4Z" transform="rotate(120)"/><path d="M-2 -4 L0 -8 L2 -4Z" transform="rotate(150)"/><path d="M-2 -4 L0 -8 L2 -4Z" transform="rotate(180)"/><path d="M-2 -4 L0 -8 L2 -4Z" transform="rotate(210)"/><path d="M-2 -4 L0 -8 L2 -4Z" transform="rotate(240)"/><path d="M-2 -4 L0 -8 L2 -4Z" transform="rotate(270)"/><path d="M-2 -4 L0 -8 L2 -4Z" transform="rotate(300)"/><path d="M-2 -4 L0 -8 L2 -4Z" transform="rotate(330)"/></g><circle r="5.500" fill="#f0701a"/><circle r="3.300" fill="#fbd23a"/></g></svg>
<svg style="left:1090px;top:715px" width="16" height="16" viewBox="0 0 16 16"><path d="M1.500 5 L6 4 L7 2 L11.500 1.500 L12 3.500 L14 3.500 L14 13 L3 13.500Z" fill="#f2d88a" stroke="#c9a23a" stroke-width=".7"/><path d="M3.500 6 L12.500 5 L12.500 13 L4.500 13.500Z" fill="#fbeeb8"/><g transform="translate(3.500,4.500) scale(.72)"><g transform="translate(8,8) scale(.88)"><g fill="#bcbce3" stroke="#8f8fc4" stroke-width=".6"><path d="M-1.900 -7.300 L1.900 -7.300 L2.400 -3.500 L-2.400 -3.500Z" transform="rotate(0)"/><path d="M-1.900 -7.300 L1.900 -7.300 L2.400 -3.500 L-2.400 -3.500Z" transform="rotate(45)"/><path d="M-1.900 -7.300 L1.900 -7.300 L2.400 -3.500 L-2.400 -3.500Z" transform="rotate(90)"/><path d="M-1.900 -7.300 L1.900 -7.300 L2.400 -3.500 L-2.400 -3.500Z" transform="rotate(135)"/><path d="M-1.900 -7.300 L1.900 -7.300 L2.400 -3.500 L-2.400 -3.500Z" transform="rotate(180)"/><path d="M-1.900 -7.300 L1.900 -7.300 L2.400 -3.500 L-2.400 -3.500Z" transform="rotate(225)"/><path d="M-1.900 -7.300 L1.900 -7.300 L2.400 -3.500 L-2.400 -3.500Z" transform="rotate(270)"/><path d="M-1.900 -7.300 L1.900 -7.300 L2.400 -3.500 L-2.400 -3.500Z" transform="rotate(315)"/></g><circle r="5.300" fill="#c3c3e8" stroke="#8f8fc4" stroke-width=".6"/><circle r="4" fill="#cdcdee"/><circle r="1.700" fill="#8a9bb0" stroke="#8f8fc4" stroke-width=".5"/></g></g></svg>
<svg style="left:1119px;top:715px" width="16" height="16" viewBox="0 0 16 16"><path d="M2 14 L11 4" stroke="#c9962a" stroke-width="2.200"/><path d="M8 1.500 L14.500 5 L13 7 L10.500 5.500 L9.500 6.500 L7 4Z" fill="#5a6a78" stroke="#2a3640" stroke-width=".6"/><path d="M14 14 L5.500 5" stroke="#b8c0c8" stroke-width="2"/><path d="M2 2.500 Q4 1 6 2.500 L4.500 4 L5.500 5.500 L7 4.500 Q7.500 7 5 7.500 Q2 7 2 2.500Z" fill="#c8d0d8" stroke="#6a7680" stroke-width=".6"/></svg>
<svg style="left:1146px;top:715px" width="16" height="16" viewBox="0 0 16 16"><path d="M5.500 1 L10.500 6.500 L7.800 6.500 L7.800 14.500 L3.200 14.500 L3.200 6.500 L.5 6.500Z" fill="#2a8ae8" stroke="#1456b0" stroke-width=".8"/><path d="M11.500 3 h2 M11.500 5.500 h2.500 M11.500 8 h3 M11.500 10.500 h3.500 M11.500 13 h4" stroke="#1f9a2a" stroke-width="1.600"/></svg>
<svg style="left:1176px;top:715px" width="16" height="16" viewBox="0 0 16 16"><path d="M1.500 5 L6 4 L7 2 L11.500 1.500 L12 3.500 L14 3.500 L14 13 L3 13.500Z" fill="#f2d88a" stroke="#c9a23a" stroke-width=".7"/><path d="M3.500 6 L12.500 5 L12.500 13 L4.500 13.500Z" fill="#fbeeb8"/><path d="M7 10.500 l2.500 3 l5 -6.500" stroke="#1f5ad0" stroke-width="2" fill="none"/></svg>
<svg style="left:1205px;top:715px" width="16" height="16" viewBox="0 0 16 16"><path d="M2.500 1.500 L14.500 8 L2.500 14.500Z" fill="#4fc82a" stroke="#2a8a14" stroke-width="1"/><path d="M4 4 L11.500 8 L4 9Z" fill="#8fe46a"/></svg>
<svg style="left:1241px;top:715px" width="16" height="16" viewBox="0 0 16 16"><rect x="1" y="1" width="1.500" height="14" fill="#5f7383"/><circle cx="7" cy="8" r="2" fill="#10141a"/><path d="M9.500 4.500 Q12 8 9.500 11.500 M12 2.500 Q15.500 8 12 13.500" stroke="#10141a" stroke-width="1.400" fill="none"/></svg>
<svg style="left:1265px;top:715px" width="16" height="16" viewBox="0 0 16 16"><rect x="3" y="1" width="12" height="10" fill="#dfe8f4" stroke="#2a4f9a" stroke-width=".8"/><rect x="1" y="3.500" width="12" height="10" fill="#f4f7fb" stroke="#2a4f9a" stroke-width=".8"/><rect x="1" y="3.500" width="12" height="2.500" fill="#3a66c0"/><path d="M1 8.500 h12 M1 11 h12 M5 6 v7.500 M9 6 v7.500" stroke="#5a7fc8" stroke-width=".7"/><path d="M8 15 h5 l-2 -2 M13 15 l-2 1" stroke="#1f3f90" stroke-width="1.200" fill="none"/></svg>
<svg style="left:1290px;top:715px" width="16" height="16" viewBox="0 0 16 16"><rect x="1" y="2.500" width="13" height="11.500" fill="#f4f4f0" stroke="#4a5560" stroke-width=".8"/><rect x="1" y="2.500" width="13" height="2.500" fill="#3a4a60"/><path d="M1 8 h13 M1 11 h13 M5.500 5 v9" stroke="#8a949c" stroke-width=".7"/><path d="M11 1 L6 8 L8.500 8 L6 14.500 L12.500 6.500 L9.800 6.500 L12.500 1Z" fill="#f9c41a" stroke="#b8860a" stroke-width=".6"/></svg>
<svg style="left:1320px;top:715px" width="16" height="16" viewBox="0 0 16 16"><circle cx="4.500" cy="4.500" r="3.300" fill="#f7d24a" stroke="#c99a1a" stroke-width=".9"/><circle cx="3.800" cy="3.800" r="1" fill="#8aa0b0"/><path d="M6.500 6.500 L14 13 L12.500 14.500 L11 13 L10 14 L8.500 12.500 L9.500 11.500 L5.500 8Z" fill="#f2c63a" stroke="#c99a1a" stroke-width=".7"/></svg>
<svg style="left:1350px;top:715px" width="16" height="16" viewBox="0 0 16 16"><circle cx="10.500" cy="4" r="2.700" fill="#f2c48a" stroke="#c9964a" stroke-width=".5"/><path d="M6.500 13 Q6.500 7.500 10.500 7.500 Q14.500 7.500 14.500 13Z" fill="#4fbf3a" stroke="#2a8a1c" stroke-width=".5"/><circle cx="4.500" cy="7.500" r="2.500" fill="#6a3a1a"/><path d="M1 14.500 Q1 10 4.500 10 Q8 10 8 14.500Z" fill="#e8b02a" stroke="#b8800a" stroke-width=".5"/><circle cx="9" cy="10.500" r="1.800" fill="#d03a2a"/></svg>
<svg style="left:1376px;top:715px" width="16" height="16" viewBox="0 0 16 16"><path d="M1.500 1.500 H13 L14.500 3 V14.500 H1.500Z" fill="#2a5fd0" stroke="#173a9a" stroke-width=".8"/><rect x="4" y="2" width="8" height="5.500" fill="#eef2f8"/><path d="M5 3.500 h6 M5 5.200 h6" stroke="#b0b8c8" stroke-width=".7"/><rect x="4.500" y="10" width="7" height="4.500" fill="#dfe4ee"/><rect x="6" y="10.800" width="2" height="3" fill="#2a4fb0"/></svg>
<svg style="left:1404px;top:716px" width="18" height="15" viewBox="0 0 18 15"><rect x="0" y="0" width="18" height="15" rx="1.500" fill="#e8c02a"/><rect x="0" y="3" width="18" height="9.500" fill="#f2cf3a"/><text x="9" y="11.600" font-family="Liberation Sans,sans-serif" font-weight="bold" font-size="10.500" text-anchor="middle" textLength="15.500" lengthAdjust="spacingAndGlyphs" fill="#000">IMDb</text></svg>
<div style="left:0;top:741px;width:1775px;height:37px;background:#728a9b"></div>
<div style="left:2px;top:741px;width:1780px;height:17px;border:1px solid #4a6272;border-radius:2px;background:linear-gradient(#7c94a5,#768e9f)"></div>
<div class="t" style="left:6px;top:743px;color:#0c1218" id="trk">Транскодирование</div>
<div style="left:2px;top:760px;width:1773px;height:19px;background:linear-gradient(#7f97a8,#70889a)"></div>
<div style="left:2px;top:760px;width:1773px;height:1px;background:#889fb0"></div>
<div style="left:21px;top:761px;width:1px;height:17px;background:#566e7f"></div>
<div style="left:22px;top:761px;width:1px;height:17px;background:#93abbb"></div>
<div style="left:41px;top:761px;width:1px;height:17px;background:#566e7f"></div>
<div style="left:42px;top:761px;width:1px;height:17px;background:#93abbb"></div>
<div style="left:402px;top:761px;width:1px;height:17px;background:#566e7f"></div>
<div style="left:403px;top:761px;width:1px;height:17px;background:#93abbb"></div>
<div style="left:590px;top:761px;width:1px;height:17px;background:#566e7f"></div>
<div style="left:591px;top:761px;width:1px;height:17px;background:#93abbb"></div>
<div style="left:808px;top:761px;width:1px;height:17px;background:#566e7f"></div>
<div style="left:809px;top:761px;width:1px;height:17px;background:#93abbb"></div>
<div style="left:1040px;top:761px;width:1px;height:17px;background:#566e7f"></div>
<div style="left:1041px;top:761px;width:1px;height:17px;background:#93abbb"></div>
<div style="left:1238px;top:761px;width:1px;height:17px;background:#566e7f"></div>
<div style="left:1239px;top:761px;width:1px;height:17px;background:#93abbb"></div>
<div style="left:1436px;top:761px;width:1px;height:17px;background:#566e7f"></div>
<div style="left:1437px;top:761px;width:1px;height:17px;background:#93abbb"></div>
<div style="left:1637px;top:761px;width:1px;height:17px;background:#566e7f"></div>
<div style="left:1638px;top:761px;width:1px;height:17px;background:#93abbb"></div>
<div class="hl" style="left:42px;top:764px;width:360px;transform:scaleX(0.9622);transform-origin:50% 0">Название</div>
<div class="hl" style="left:403px;top:764px;width:187px;transform:scaleX(0.9756);transform-origin:50% 0">Исходный файл</div>
<div class="hl" style="left:591px;top:764px;width:217px;transform:scaleX(1.0299);transform-origin:50% 0">Скорость (к/с)</div>
<div class="hl" style="left:809px;top:764px;width:231px;transform:scaleX(1.0228);transform-origin:50% 0">Битрейт (кБит/с)</div>
<div class="hl" style="left:1041px;top:764px;width:197px;transform:scaleX(1.0254);transform-origin:50% 0">Кадр</div>
<div class="hl" style="left:1239px;top:764px;width:197px;transform:scaleX(0.9391);transform-origin:50% 0">Время (с)</div>
<div class="hl" style="left:1437px;top:764px;width:200px;transform:scaleX(0.9662);transform-origin:50% 0">Размер (кБ)</div>
<div class="hl" style="left:1638px;top:764px;width:199px;transform:scaleX(1.0190);transform-origin:50% 0">Качество</div>
<div style="left:2px;top:779px;width:1773px;height:18px;background:#ffc9c9;border-bottom:1px solid #5e7686"></div>
<div style="left:2px;top:779px;width:19px;height:17px;background:#fdecec"></div>
<div style="left:21px;top:779px;width:1px;height:17px;background:#7a8c98"></div>
<div style="left:41px;top:779px;width:1px;height:17px;background:#7a8c98"></div>
<div style="left:402px;top:779px;width:1px;height:17px;background:#7a8c98"></div>
<div style="left:590px;top:779px;width:1px;height:17px;background:#7a8c98"></div>
<div style="left:808px;top:779px;width:1px;height:17px;background:#7a8c98"></div>
<div style="left:1040px;top:779px;width:1px;height:17px;background:#7a8c98"></div>
<div style="left:1238px;top:779px;width:1px;height:17px;background:#7a8c98"></div>
<div style="left:1436px;top:779px;width:1px;height:17px;background:#7a8c98"></div>
<div style="left:1637px;top:779px;width:1px;height:17px;background:#7a8c98"></div>
<svg style="left:5px;top:779px" width="16" height="16" viewBox="0 0 16 16"><path d="M2 3.500 L4.500 1.500 L8 5.500 L11.500 1.500 L14.500 3.500 L10.500 8 L14.500 12.500 L12 14.800 L8 10.500 L4.500 14.800 L1.500 12.500 L5.500 8Z" fill="#ee4a2a" stroke="#b81c0c" stroke-width=".7"/></svg>
<svg style="left:23px;top:779px" width="17" height="17" viewBox="0 0 17 17"><defs><linearGradient id="ig" x1="0" y1="0" x2="1" y2="1"><stop offset="0" stop-color="#5a9af0"/><stop offset="1" stop-color="#0f3fb0"/></linearGradient></defs><path d="M8.500 .7 L16.300 8.500 L8.500 16.300 L.7 8.500Z" fill="#f2f6ff" stroke="#b4c2e0" stroke-width=".7"/><path d="M8.500 2.600 L14.400 8.500 L8.500 14.400 L2.600 8.500Z" fill="url(#ig)" stroke="#1a4ab8" stroke-width=".6"/><rect x="7.700" y="7.300" width="1.700" height="4.500" fill="#fff"/><circle cx="8.500" cy="5.300" r="1.100" fill="#fff"/></svg>
<div class="t" style="left:44px;top:782px;transform:scaleX(0.9523);transform-origin:0 0">TV1000 ACTION - Х/Ф &amp;QUOT;КЛИН КЛИНОМ&amp;QUOT;</div>
<div class="t" style="left:406px;top:782px">-</div>
<div class="hl" style="left:1437px;top:782px;width:200px">0,0</div>
<div style="left:0;top:797px;width:2px;height:19px;background:#7c94a4"></div>
<div style="left:23px;top:59px;width:677px;height:342px;border:1px solid #18222c;border-radius:7px 7px 0 0;background:#b5cfe9;overflow:hidden"><div style="left:0;top:0;width:675px;height:31px;background:linear-gradient(#9db8d4 0%,#adc5df 50%,#c2d6eb 100%)"></div><div style="left:0;top:0;width:675px;height:340px;border:1px solid rgba(255,255,255,.75);border-radius:6px 6px 0 0"></div><div style="left:673px;top:30px;width:1px;height:310px;background:#8fbbe4"></div><div style="left:1px;top:337px;width:673px;height:2px;background:#9fd6ee"></div><div style="left:8px;top:30px;width:659px;height:302px;background:#fff"></div><div style="left:8px;top:30px;width:658px;height:301px;background:#7e8c9a"></div><div style="left:9px;top:31px;width:640px;height:300px;background:#000;overflow:hidden"><div class="con" style="top:12px">&quot;C:\Users\user\AppData\Roaming\ACEStream\player\ace_player.exe&quot; --no-crashdump -</div><div class="con" style="top:24px">-play-and-exit -Idummy --language en --demuxdump-file=&quot;C:\Users\user\AppData\Loc</div><div class="con" style="top:36px">al\Home Media Server\HMS\Temp\Test_3cbca98ab5bde1c50d9005aea59b6e58.ts&quot; --access</div><div class="con" style="top:48px">=p2p_access &quot;66347cfbc70a209db5c9c6e18268d18932ec68e2&quot; :demux=dump</div><div style="left:0;top:81px;width:8px;height:3px;background:#c0c0c0"></div></div><div style="left:649px;top:31px;width:17px;height:300px;background:linear-gradient(90deg,#e9e9e9,#f4f4f4 30%,#f0f0f0)"></div><svg style="left:654px;top:37px" width="9" height="5" viewBox="0 0 9 5"><path d="M.5 4.500 L4.500 .5 L8.500 4.500Z" fill="#505860"/></svg><svg style="left:654px;top:320px" width="9" height="5" viewBox="0 0 9 5"><path d="M.5 .5 L4.500 4.500 L8.500 .5Z" fill="#505860"/></svg><div style="left:651px;top:49px;width:14px;height:20px;border:1px solid #9a9ea4;border-radius:2px;background:linear-gradient(90deg,#f8f8f8,#e4e4e6 55%,#cfcfd3)"></div><div style="left:654px;top:55px;width:8px;height:7px;background:repeating-linear-gradient(180deg,#60686f 0 1px,#fff 1px 2px,transparent 2px 3px)"></div><div style="left:569px;top:9px;width:31px;height:17px;border:1px solid #6a87a5;border-radius:3px;background:linear-gradient(#c9dcef 0%,#bcd2e8 48%,#a6c0da 52%,#b7cee6 100%);box-shadow:inset 0 0 0 1px rgba(255,255,255,.55)"></div><div style="left:602px;top:9px;width:31px;height:17px;border:1px solid #6a87a5;border-radius:3px;background:linear-gradient(#c9dcef 0%,#bcd2e8 48%,#a6c0da 52%,#b7cee6 100%);box-shadow:inset 0 0 0 1px rgba(255,255,255,.55)"></div><div style="left:635px;top:9px;width:31px;height:17px;border:1px solid #5e1c12;border-radius:3px;background:linear-gradient(#ebb2a6 0%,#dc7f6b 48%,#c9442c 52%,#d76a50 100%);box-shadow:inset 0 0 0 1px rgba(255,255,255,.55)"></div><div style="left:579px;top:17px;width:11px;height:5px;background:#fff;border:1px solid #3c4652;border-radius:1px"></div><div style="left:612px;top:13px;width:11px;height:9px;background:#fff;border:1px solid #3c4652;border-radius:1px"></div><div style="left:615px;top:16px;width:5px;height:3px;background:#a9c2dc;border:1px solid #3c4652"></div><svg style="left:644px;top:12px" width="13" height="11" viewBox="0 0 13 11"><path d="M.8 1.200 L4.200 1.200 L6.500 3.400 L8.800 1.200 L12.200 1.200 L8.600 5.300 L12.200 9.400 L8.800 9.400 L6.500 7.200 L4.200 9.400 L.8 9.400 L4.400 5.300Z" fill="#fff" stroke="#5a2018" stroke-width=".9"/></svg><div style="left:9px;top:12px;width:16px;height:12px;background:#000;border-top:2px solid #b8bec4"></div><div class="t" style="left:10px;top:13px;font-size:7px;line-height:9px;height:9px;color:#fff;font-weight:bold;letter-spacing:-.3px">C:\_</div><div class="t" id="ct1" style="left:30px;top:11px;font-size:12px;line-height:14px;height:14px;color:#101418">C:\Windows\system32\cmd.exe</div></div>
<div style="left:719px;top:48px;width:677px;height:342px;border:1px solid #5e6e7c;border-radius:7px 7px 0 0;background:#d3e1ef;overflow:hidden"><div style="left:0;top:0;width:675px;height:31px;background:linear-gradient(#c1cfdc 0%,#d3dfeb 50%,#e4edf6 100%)"></div><div style="left:0;top:0;width:675px;height:340px;border:1px solid rgba(255,255,255,.75);border-radius:6px 6px 0 0"></div><div style="left:8px;top:30px;width:659px;height:302px;background:#fff"></div><div style="left:8px;top:30px;width:658px;height:301px;background:#7e8c9a"></div><div style="left:9px;top:31px;width:640px;height:300px;background:#000;overflow:hidden"><div class="con" style="top:0px">[0x1dd8650] dummy interface: VLC media player - 2.0.5 Ace Stream</div><div class="con" style="top:12px">[0x1dd8650] dummy interface: Copyright c 1996-2012 VLC authors and VideoLAN</div><div class="con" style="top:24px">[0x1dd8650] dummy interface: </div><div class="con" style="top:36px">Warning: if you cannot access the GUI anymore, open a command-line window, go to</div><div class="con" style="top:48px"> the directory where you installed VLC and run &quot;vlc -I qt&quot;</div><div class="con" style="top:72px">[0x1dd8650] dummy interface: using the dummy interface module...</div></div><div style="left:649px;top:31px;width:17px;height:300px;background:linear-gradient(90deg,#e9e9e9,#f4f4f4 30%,#f0f0f0)"></div><svg style="left:654px;top:37px" width="9" height="5" viewBox="0 0 9 5"><path d="M.5 4.500 L4.500 .5 L8.500 4.500Z" fill="#505860"/></svg><svg style="left:654px;top:320px" width="9" height="5" viewBox="0 0 9 5"><path d="M.5 .5 L4.500 4.500 L8.500 .5Z" fill="#505860"/></svg><div style="left:651px;top:49px;width:14px;height:20px;border:1px solid #9a9ea4;border-radius:2px;background:linear-gradient(90deg,#f8f8f8,#e4e4e6 55%,#cfcfd3)"></div><div style="left:654px;top:55px;width:8px;height:7px;background:repeating-linear-gradient(180deg,#60686f 0 1px,#fff 1px 2px,transparent 2px 3px)"></div><div style="left:569px;top:9px;width:31px;height:17px;border:1px solid #8898a8;border-radius:3px;background:linear-gradient(#e0e9f2 0%,#d5e0ec 48%,#c7d4e2 52%,#d3dfeb 100%);box-shadow:inset 0 0 0 1px rgba(255,255,255,.55)"></div><div style="left:602px;top:9px;width:31px;height:17px;border:1px solid #8898a8;border-radius:3px;background:linear-gradient(#e0e9f2 0%,#d5e0ec 48%,#c7d4e2 52%,#d3dfeb 100%);box-shadow:inset 0 0 0 1px rgba(255,255,255,.55)"></div><div style="left:635px;top:9px;width:31px;height:17px;border:1px solid #8898a8;border-radius:3px;background:linear-gradient(#e0e9f2 0%,#d5e0ec 48%,#c7d4e2 52%,#d3dfeb 100%);box-shadow:inset 0 0 0 1px rgba(255,255,255,.55)"></div><div style="left:579px;top:17px;width:11px;height:5px;background:#f4f6f8;border:1px solid #5a6470;border-radius:1px"></div><div style="left:612px;top:13px;width:11px;height:9px;background:#f4f6f8;border:1px solid #5a6470;border-radius:1px"></div><div style="left:615px;top:16px;width:5px;height:3px;background:#cdd9e5;border:1px solid #5a6470"></div><svg style="left:644px;top:12px" width="13" height="11" viewBox="0 0 13 11"><path d="M.8 1.200 L4.200 1.200 L6.500 3.400 L8.800 1.200 L12.200 1.200 L8.600 5.300 L12.200 9.400 L8.800 9.400 L6.500 7.200 L4.200 9.400 L.8 9.400 L4.400 5.300Z" fill="#f4f6f8" stroke="#5a6470" stroke-width=".9"/></svg><div style="left:9px;top:10px;width:15px;height:13px;background:#fbfcfd;border:1px solid #9aa8b6"></div><div style="left:11px;top:13px;width:5px;height:8px;background:linear-gradient(#4a8a8a,#3f9a6a)"></div><div style="left:21px;top:13px;width:1px;height:4px;background:#283038"></div></div>
</body></html>
